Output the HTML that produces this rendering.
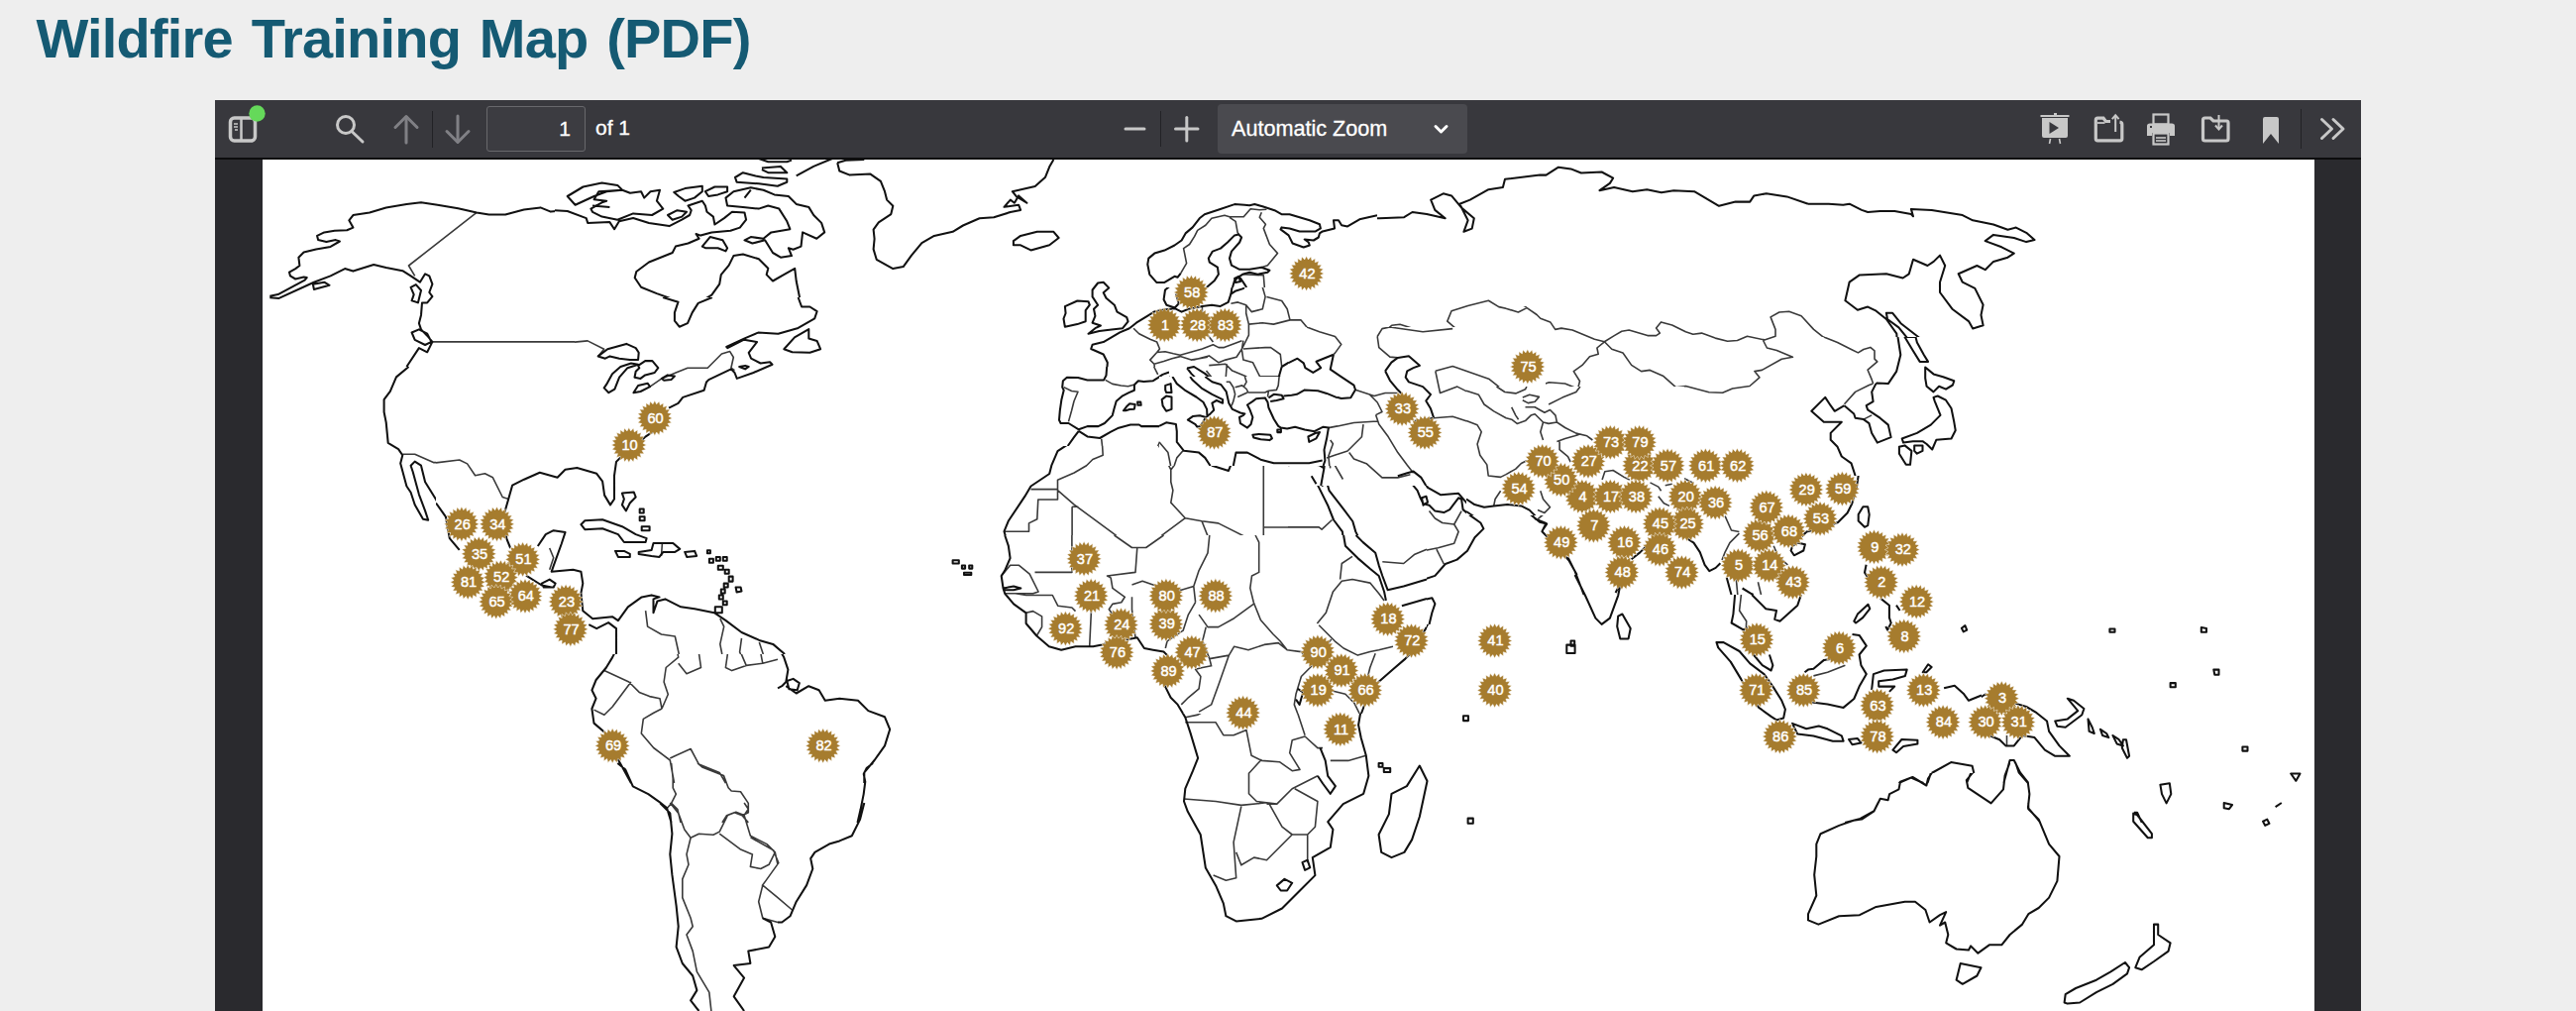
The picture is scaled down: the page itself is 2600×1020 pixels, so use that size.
<!DOCTYPE html>
<html><head><meta charset="utf-8">
<style>
html,body{margin:0;padding:0;}
body{width:2600px;height:1020px;overflow:hidden;background:#eeeeee;position:relative;font-family:"Liberation Sans",sans-serif;}
#title{position:absolute;left:36.5px;top:1px;margin:0;font-size:56px;font-weight:bold;color:#155a73;letter-spacing:-0.8px;word-spacing:4px;line-height:76px;white-space:nowrap;}
#viewer{position:absolute;left:217px;top:101px;width:2166px;height:919px;background:#2a2a2e;}
#toolbar{position:absolute;left:0;top:0;width:2166px;height:58px;background:#38383d;border-bottom:2px solid #0c0c0d;}
#page{position:absolute;left:48px;top:60px;width:2071px;height:900px;background:#fff;}
.ic{position:absolute;}
#pagenum{-webkit-text-stroke:0.3px #fff;position:absolute;left:274px;top:6px;width:100px;height:46px;box-sizing:border-box;border:1.5px solid #68686c;border-radius:3px;background:#3c3c41;color:#fff;font-size:21px;text-align:right;padding-right:14px;line-height:44px;}
#of{-webkit-text-stroke:0.3px #fff;position:absolute;left:384px;top:6px;line-height:44px;color:#fff;font-size:21px;}
#zoomsel{-webkit-text-stroke:0.3px #fff;position:absolute;left:1012px;top:4px;width:252px;height:50px;background:#4a4a4f;border-radius:4px;color:#fff;font-size:21.6px;line-height:50px;}
#zoomsel span{position:absolute;left:14px;top:0;}
.sep{position:absolute;width:1px;background:#222226;}
svg{position:absolute;left:0;top:0;}
</style></head>
<body>
<h1 id="title">Wildfire Training Map (PDF)</h1>
<div id="viewer">
  <div id="toolbar">
    <!-- sidebar toggle -->
    <svg class="ic" style="left:12px;top:14px" width="40" height="34" viewBox="0 0 40 34">
      <rect x="3.5" y="4" width="25" height="23" rx="4" fill="none" stroke="#c8c8c8" stroke-width="3.5"/>
      <line x1="14.5" y1="5" x2="14.5" y2="27" stroke="#c8c8c8" stroke-width="2.5"/>
      <line x1="7" y1="10" x2="11" y2="10" stroke="#c8c8c8" stroke-width="1.5"/>
      <line x1="7" y1="13" x2="11" y2="13" stroke="#c8c8c8" stroke-width="1.5"/>
      <line x1="8" y1="16" x2="11" y2="16" stroke="#c8c8c8" stroke-width="1.5"/>
      <circle cx="28.5" cy="0" r="0" fill="#65d95a"/>
    </svg>
    <svg class="ic" style="left:33px;top:5px" width="20" height="20"><circle cx="9.5" cy="8.5" r="8.2" fill="#65d95a"/></svg>
    <!-- search -->
    <svg class="ic" style="left:118px;top:12px" width="34" height="34" viewBox="0 0 34 34">
      <circle cx="14" cy="13" r="8.5" fill="none" stroke="#c8c8c8" stroke-width="3"/>
      <line x1="20" y1="19.5" x2="31" y2="30" stroke="#c8c8c8" stroke-width="3" stroke-linecap="round"/>
    </svg>
    <!-- up -->
    <svg class="ic" style="left:178px;top:12px" width="30" height="34" viewBox="0 0 30 34">
      <line x1="15" y1="5" x2="15" y2="31" stroke="#808085" stroke-width="3" stroke-linecap="round"/>
      <polyline points="4,15.5 15,4.5 26,15.5" fill="none" stroke="#808085" stroke-width="3" stroke-linecap="round" stroke-linejoin="round"/>
    </svg>
    <div class="sep" style="left:219px;top:11px;height:37px"></div>
    <!-- down -->
    <svg class="ic" style="left:230px;top:12px" width="30" height="34" viewBox="0 0 30 34">
      <line x1="15" y1="4" x2="15" y2="30" stroke="#808085" stroke-width="3" stroke-linecap="round"/>
      <polyline points="4,19.5 15,30.5 26,19.5" fill="none" stroke="#808085" stroke-width="3" stroke-linecap="round" stroke-linejoin="round"/>
    </svg>
    <div id="pagenum">1</div>
    <div id="of">of 1</div>
    <!-- zoom out -->
    <svg class="ic" style="left:915px;top:12px" width="30" height="34" viewBox="0 0 30 34">
      <line x1="4" y1="17" x2="23" y2="17" stroke="#c8c8c8" stroke-width="3" stroke-linecap="round"/>
    </svg>
    <div class="sep" style="left:954px;top:11px;height:36px"></div>
    <!-- zoom in -->
    <svg class="ic" style="left:966px;top:12px" width="30" height="34" viewBox="0 0 30 34">
      <line x1="3.5" y1="17" x2="26" y2="17" stroke="#c8c8c8" stroke-width="3" stroke-linecap="round"/>
      <line x1="14.8" y1="5.5" x2="14.8" y2="29" stroke="#c8c8c8" stroke-width="3" stroke-linecap="round"/>
    </svg>
    <div id="zoomsel"><span>Automatic Zoom</span>
      <svg class="ic" style="left:217px;top:19px" width="20" height="14" viewBox="0 0 20 14"><polyline points="3,3.5 8.5,9 14,3.5" fill="none" stroke="#fff" stroke-width="3" stroke-linecap="round" stroke-linejoin="round"/></svg>
    </div>
    <!-- right icons -->
    <svg class="ic" style="left:1840px;top:12px" width="36" height="36" viewBox="0 0 36 36">
      <line x1="2.5" y1="4" x2="31.5" y2="4" stroke="#c8c8c8" stroke-width="2"/>
      <rect x="16" y="1" width="3" height="3" fill="#c8c8c8"/>
      <path d="M4 6 H30 V24 Q30 26 28 26 H6 Q4 26 4 24 Z" fill="#c8c8c8"/>
      <path d="M11.5 10 L21 16 L11.5 22 Z" fill="#38383d"/>
      <line x1="12.5" y1="27" x2="11.5" y2="32" stroke="#c8c8c8" stroke-width="1.6"/>
      <line x1="21.5" y1="27" x2="22.5" y2="32" stroke="#c8c8c8" stroke-width="1.6"/>
    </svg>
    <svg class="ic" style="left:1895px;top:12px" width="36" height="36" viewBox="0 0 36 36">
      <path d="M18 9.5 H13.5 L11 6.2 H5.2 Q3.3 6.2 3.3 8.2 V27 Q3.3 28.8 5.2 28.8 H27.8 Q29.8 28.8 29.8 27 V12.5 Q29.8 10.5 27.5 10.2" fill="none" stroke="#c8c8c8" stroke-width="3.2"/>
      <line x1="5" y1="11" x2="12.5" y2="11" stroke="#c8c8c8" stroke-width="1.8"/>
      <line x1="23.2" y1="20" x2="23.2" y2="3.5" stroke="#c8c8c8" stroke-width="2"/>
      <polyline points="19.8,7.2 23.2,3.3 26.6,7.2" fill="none" stroke="#c8c8c8" stroke-width="2"/>
    </svg>
    <svg class="ic" style="left:1949px;top:12px" width="36" height="36" viewBox="0 0 36 36">
      <rect x="7.5" y="2.5" width="15" height="10" fill="none" stroke="#c8c8c8" stroke-width="2.2"/>
      <path d="M1 14 Q1 11.5 4 11.5 H26 Q29 11.5 29 14 V24 H24 V21 H6 V24 H1 Z" fill="#c8c8c8"/>
      <rect x="7.5" y="21.5" width="15" height="11" fill="none" stroke="#c8c8c8" stroke-width="2.2"/>
      <line x1="10" y1="26" x2="20" y2="26" stroke="#c8c8c8" stroke-width="1.6"/>
      <line x1="10" y1="29" x2="20" y2="29" stroke="#c8c8c8" stroke-width="1.6"/>
      <rect x="4" y="14" width="2" height="2" fill="#38383d"/>
    </svg>
    <svg class="ic" style="left:2004px;top:12px" width="36" height="36" viewBox="0 0 36 36">
      <path d="M2.5 8 Q2.5 6 4.5 6 H10 L13 9 H26.5 Q28 9 28 11 V27 Q28 29 26 29 H4.5 Q2.5 29 2.5 27 Z" fill="none" stroke="#c8c8c8" stroke-width="3.2"/>
      <line x1="18.5" y1="3" x2="18.5" y2="17" stroke="#c8c8c8" stroke-width="2"/>
      <polyline points="15,13.5 18.5,17.5 22,13.5" fill="none" stroke="#c8c8c8" stroke-width="2"/>
    </svg>
    <svg class="ic" style="left:2064px;top:12px" width="24" height="36" viewBox="0 0 24 36">
      <path d="M3 7 Q3 5 5 5 H17 Q19 5 19 7 V32 L11 22 L3 32 Z" fill="#c8c8c8"/>
    </svg>
    <div class="sep" style="left:2105px;top:9px;height:40px"></div>
    <svg class="ic" style="left:2122px;top:12px" width="32" height="36" viewBox="0 0 32 36">
      <polyline points="4.5,7.5 14.5,17 4.5,26.5" fill="none" stroke="#c8c8c8" stroke-width="3" stroke-linecap="round" stroke-linejoin="round"/>
      <polyline points="16,7.5 26,17 16,26.5" fill="none" stroke="#c8c8c8" stroke-width="3" stroke-linecap="round" stroke-linejoin="round"/>
    </svg>
  </div>
  <div id="page">
<svg width="2071" height="860" viewBox="0 0 2071 860" style="position:absolute;left:0;top:-1px">
<defs><mask id="mk" maskUnits="userSpaceOnUse" x="0" y="0" width="2071" height="860"><rect x="-10" y="-10" width="2100" height="900" fill="#fff"/><rect x="1035" y="320" width="230" height="150" fill="#000"/><rect x="295" y="0" width="280" height="160" fill="#000"/><rect x="1255" y="150" width="320" height="90" fill="#000"/><rect x="175" y="300" width="360" height="200" fill="#000"/><rect x="785" y="120" width="350" height="140" fill="#000"/><rect x="315" y="140" width="260" height="120" fill="#000"/><rect x="785" y="210" width="130" height="80" fill="#000"/><rect x="1435" y="280" width="260" height="160" fill="#000"/><rect x="1555" y="180" width="180" height="140" fill="#000"/><rect x="1035" y="170" width="260" height="160" fill="#000"/><rect x="905" y="220" width="180" height="90" fill="#000"/><rect x="1215" y="230" width="220" height="130" fill="#000"/><rect x="885" y="520" width="300" height="260" fill="#000"/><rect x="865" y="30" width="260" height="100" fill="#000"/><rect x="1455" y="440" width="280" height="180" fill="#000"/><rect x="735" y="380" width="440" height="180" fill="#000"/></mask><mask id="cp0" maskUnits="userSpaceOnUse" x="0" y="0" width="2071" height="860"><rect x="1035" y="320" width="230" height="150" fill="#fff"/><rect x="295" y="0" width="280" height="160" fill="#000"/><rect x="1255" y="150" width="320" height="90" fill="#000"/><rect x="175" y="300" width="360" height="200" fill="#000"/><rect x="785" y="120" width="350" height="140" fill="#000"/><rect x="315" y="140" width="260" height="120" fill="#000"/><rect x="785" y="210" width="130" height="80" fill="#000"/><rect x="1435" y="280" width="260" height="160" fill="#000"/><rect x="1555" y="180" width="180" height="140" fill="#000"/><rect x="1035" y="170" width="260" height="160" fill="#000"/><rect x="905" y="220" width="180" height="90" fill="#000"/><rect x="1215" y="230" width="220" height="130" fill="#000"/><rect x="885" y="520" width="300" height="260" fill="#000"/><rect x="865" y="30" width="260" height="100" fill="#000"/><rect x="1455" y="440" width="280" height="180" fill="#000"/><rect x="735" y="380" width="440" height="180" fill="#000"/></mask><mask id="cp1" maskUnits="userSpaceOnUse" x="0" y="0" width="2071" height="860"><rect x="295" y="0" width="280" height="160" fill="#fff"/><rect x="1255" y="150" width="320" height="90" fill="#000"/><rect x="175" y="300" width="360" height="200" fill="#000"/><rect x="785" y="120" width="350" height="140" fill="#000"/><rect x="315" y="140" width="260" height="120" fill="#000"/><rect x="785" y="210" width="130" height="80" fill="#000"/><rect x="1435" y="280" width="260" height="160" fill="#000"/><rect x="1555" y="180" width="180" height="140" fill="#000"/><rect x="1035" y="170" width="260" height="160" fill="#000"/><rect x="905" y="220" width="180" height="90" fill="#000"/><rect x="1215" y="230" width="220" height="130" fill="#000"/><rect x="885" y="520" width="300" height="260" fill="#000"/><rect x="865" y="30" width="260" height="100" fill="#000"/><rect x="1455" y="440" width="280" height="180" fill="#000"/><rect x="735" y="380" width="440" height="180" fill="#000"/></mask><mask id="cp2" maskUnits="userSpaceOnUse" x="0" y="0" width="2071" height="860"><rect x="1255" y="150" width="320" height="90" fill="#fff"/><rect x="175" y="300" width="360" height="200" fill="#000"/><rect x="785" y="120" width="350" height="140" fill="#000"/><rect x="315" y="140" width="260" height="120" fill="#000"/><rect x="785" y="210" width="130" height="80" fill="#000"/><rect x="1435" y="280" width="260" height="160" fill="#000"/><rect x="1555" y="180" width="180" height="140" fill="#000"/><rect x="1035" y="170" width="260" height="160" fill="#000"/><rect x="905" y="220" width="180" height="90" fill="#000"/><rect x="1215" y="230" width="220" height="130" fill="#000"/><rect x="885" y="520" width="300" height="260" fill="#000"/><rect x="865" y="30" width="260" height="100" fill="#000"/><rect x="1455" y="440" width="280" height="180" fill="#000"/><rect x="735" y="380" width="440" height="180" fill="#000"/></mask><mask id="cp3" maskUnits="userSpaceOnUse" x="0" y="0" width="2071" height="860"><rect x="175" y="300" width="360" height="200" fill="#fff"/><rect x="785" y="120" width="350" height="140" fill="#000"/><rect x="315" y="140" width="260" height="120" fill="#000"/><rect x="785" y="210" width="130" height="80" fill="#000"/><rect x="1435" y="280" width="260" height="160" fill="#000"/><rect x="1555" y="180" width="180" height="140" fill="#000"/><rect x="1035" y="170" width="260" height="160" fill="#000"/><rect x="905" y="220" width="180" height="90" fill="#000"/><rect x="1215" y="230" width="220" height="130" fill="#000"/><rect x="885" y="520" width="300" height="260" fill="#000"/><rect x="865" y="30" width="260" height="100" fill="#000"/><rect x="1455" y="440" width="280" height="180" fill="#000"/><rect x="735" y="380" width="440" height="180" fill="#000"/></mask><mask id="cp4" maskUnits="userSpaceOnUse" x="0" y="0" width="2071" height="860"><rect x="785" y="120" width="350" height="140" fill="#fff"/><rect x="315" y="140" width="260" height="120" fill="#000"/><rect x="785" y="210" width="130" height="80" fill="#000"/><rect x="1435" y="280" width="260" height="160" fill="#000"/><rect x="1555" y="180" width="180" height="140" fill="#000"/><rect x="1035" y="170" width="260" height="160" fill="#000"/><rect x="905" y="220" width="180" height="90" fill="#000"/><rect x="1215" y="230" width="220" height="130" fill="#000"/><rect x="885" y="520" width="300" height="260" fill="#000"/><rect x="865" y="30" width="260" height="100" fill="#000"/><rect x="1455" y="440" width="280" height="180" fill="#000"/><rect x="735" y="380" width="440" height="180" fill="#000"/></mask><mask id="cp5" maskUnits="userSpaceOnUse" x="0" y="0" width="2071" height="860"><rect x="315" y="140" width="260" height="120" fill="#fff"/><rect x="785" y="210" width="130" height="80" fill="#000"/><rect x="1435" y="280" width="260" height="160" fill="#000"/><rect x="1555" y="180" width="180" height="140" fill="#000"/><rect x="1035" y="170" width="260" height="160" fill="#000"/><rect x="905" y="220" width="180" height="90" fill="#000"/><rect x="1215" y="230" width="220" height="130" fill="#000"/><rect x="885" y="520" width="300" height="260" fill="#000"/><rect x="865" y="30" width="260" height="100" fill="#000"/><rect x="1455" y="440" width="280" height="180" fill="#000"/><rect x="735" y="380" width="440" height="180" fill="#000"/></mask><mask id="cp6" maskUnits="userSpaceOnUse" x="0" y="0" width="2071" height="860"><rect x="785" y="210" width="130" height="80" fill="#fff"/><rect x="1435" y="280" width="260" height="160" fill="#000"/><rect x="1555" y="180" width="180" height="140" fill="#000"/><rect x="1035" y="170" width="260" height="160" fill="#000"/><rect x="905" y="220" width="180" height="90" fill="#000"/><rect x="1215" y="230" width="220" height="130" fill="#000"/><rect x="885" y="520" width="300" height="260" fill="#000"/><rect x="865" y="30" width="260" height="100" fill="#000"/><rect x="1455" y="440" width="280" height="180" fill="#000"/><rect x="735" y="380" width="440" height="180" fill="#000"/></mask><mask id="cp7" maskUnits="userSpaceOnUse" x="0" y="0" width="2071" height="860"><rect x="1435" y="280" width="260" height="160" fill="#fff"/><rect x="1555" y="180" width="180" height="140" fill="#000"/><rect x="1035" y="170" width="260" height="160" fill="#000"/><rect x="905" y="220" width="180" height="90" fill="#000"/><rect x="1215" y="230" width="220" height="130" fill="#000"/><rect x="885" y="520" width="300" height="260" fill="#000"/><rect x="865" y="30" width="260" height="100" fill="#000"/><rect x="1455" y="440" width="280" height="180" fill="#000"/><rect x="735" y="380" width="440" height="180" fill="#000"/></mask><mask id="cp8" maskUnits="userSpaceOnUse" x="0" y="0" width="2071" height="860"><rect x="1555" y="180" width="180" height="140" fill="#fff"/><rect x="1035" y="170" width="260" height="160" fill="#000"/><rect x="905" y="220" width="180" height="90" fill="#000"/><rect x="1215" y="230" width="220" height="130" fill="#000"/><rect x="885" y="520" width="300" height="260" fill="#000"/><rect x="865" y="30" width="260" height="100" fill="#000"/><rect x="1455" y="440" width="280" height="180" fill="#000"/><rect x="735" y="380" width="440" height="180" fill="#000"/></mask><mask id="cp9" maskUnits="userSpaceOnUse" x="0" y="0" width="2071" height="860"><rect x="1035" y="170" width="260" height="160" fill="#fff"/><rect x="905" y="220" width="180" height="90" fill="#000"/><rect x="1215" y="230" width="220" height="130" fill="#000"/><rect x="885" y="520" width="300" height="260" fill="#000"/><rect x="865" y="30" width="260" height="100" fill="#000"/><rect x="1455" y="440" width="280" height="180" fill="#000"/><rect x="735" y="380" width="440" height="180" fill="#000"/></mask><mask id="cp10" maskUnits="userSpaceOnUse" x="0" y="0" width="2071" height="860"><rect x="905" y="220" width="180" height="90" fill="#fff"/><rect x="1215" y="230" width="220" height="130" fill="#000"/><rect x="885" y="520" width="300" height="260" fill="#000"/><rect x="865" y="30" width="260" height="100" fill="#000"/><rect x="1455" y="440" width="280" height="180" fill="#000"/><rect x="735" y="380" width="440" height="180" fill="#000"/></mask><mask id="cp11" maskUnits="userSpaceOnUse" x="0" y="0" width="2071" height="860"><rect x="1215" y="230" width="220" height="130" fill="#fff"/><rect x="885" y="520" width="300" height="260" fill="#000"/><rect x="865" y="30" width="260" height="100" fill="#000"/><rect x="1455" y="440" width="280" height="180" fill="#000"/><rect x="735" y="380" width="440" height="180" fill="#000"/></mask><mask id="cp12" maskUnits="userSpaceOnUse" x="0" y="0" width="2071" height="860"><rect x="885" y="520" width="300" height="260" fill="#fff"/><rect x="865" y="30" width="260" height="100" fill="#000"/><rect x="1455" y="440" width="280" height="180" fill="#000"/><rect x="735" y="380" width="440" height="180" fill="#000"/></mask><mask id="cp13" maskUnits="userSpaceOnUse" x="0" y="0" width="2071" height="860"><rect x="865" y="30" width="260" height="100" fill="#fff"/><rect x="1455" y="440" width="280" height="180" fill="#000"/><rect x="735" y="380" width="440" height="180" fill="#000"/></mask><mask id="cp14" maskUnits="userSpaceOnUse" x="0" y="0" width="2071" height="860"><rect x="1455" y="440" width="280" height="180" fill="#fff"/><rect x="735" y="380" width="440" height="180" fill="#000"/></mask><mask id="cp15" maskUnits="userSpaceOnUse" x="0" y="0" width="2071" height="860"><rect x="735" y="380" width="440" height="180" fill="#fff"/></mask></defs>
<g mask="url(#mk)"><path d="M216.1 54.4 L147.5 108.0 L153.7 118.4 M171.4 184.9 L327.2 184.9 L336.6 189.5 L353.2 192.2 M927.2 122.6 L931.3 93.5 L945.9 72.7 L960.4 60.2 L977.1 58.2 L1006.1 51.9 M1006.1 51.9 L1010.3 68.6 L1022.8 97.6 L1014.4 112.2 M995.7 120.5 L1012.4 122.6 M979.1 135.0 L1006.1 133.0 L1012.4 137.1 M977.1 145.4 L993.7 153.7 L1008.2 145.4 M1012.4 122.6 L1014.4 141.3 L1008.2 151.7 L995.7 153.7 L997.8 166.2 L1018.6 168.3 L1040.0 164.1 M1012.4 139.2 L1031.1 141.3 L1035.2 153.7 L1040.0 157.9 M879.4 172.4 L889.8 182.8 L900.2 187.0 L910.6 184.9 M902.3 195.3 L910.6 205.7 L935.5 203.6 L948.0 207.8 M956.3 180.7 L987.4 182.8 L991.6 191.1 L987.4 205.7 M898.1 199.4 L914.7 195.3 L933.4 191.1 L945.9 188.0 L960.4 188.0 L985.4 190.1 M991.6 193.2 L1016.5 191.1 L1026.9 199.4 L1029.0 210.0 M997.8 205.7 L1014.4 201.5 M952.1 180.7 L950.0 149.6 M1127.3 178.7 L1139.7 168.3 L1148.0 167.2 L1170.9 174.5 L1183.3 171.4 L1195.8 175.5 L1203.1 170.4 L1195.8 164.1 L1200.0 153.7 L1216.6 148.5 L1237.4 143.3 L1247.8 149.6 L1266.4 153.7 L1274.8 149.6 L1287.2 160.0 L1303.8 170.4 L1310.1 172.4 L1326.7 178.7 L1351.6 182.8 L1357.9 184.9 L1368.2 199.4 L1382.8 210.0 M1353.7 182.8 L1372.4 173.5 L1382.8 172.4 L1405.6 178.7 L1409.8 166.2 L1420.2 168.3 L1445.1 176.6 L1455.5 176.6 L1482.5 183.9 L1497.1 178.7 L1515.7 181.8 L1524.1 174.5 L1522.0 160.0 L1534.4 153.7 L1549.0 155.8 L1560.0 162.0 M1353.7 182.8 L1347.5 191.1 L1343.3 199.4 L1335.0 205.7 L1330.9 210.0 M1515.7 181.8 L1515.7 191.1 L1524.1 193.2 L1542.8 200.5 L1534.4 203.6 L1517.8 210.0 M1127.3 178.7 L1125.2 187.0 L1133.5 197.4 L1141.8 203.6 M1040.0 162.0 L1046.2 162.0 L1056.6 172.4 L1081.6 178.7 L1088.8 187.0 L1081.6 197.4 L1062.9 207.8 M1040.0 201.5 L1048.3 203.6 L1052.5 210.0 M1560.0 164.1 L1572.5 178.7 L1587.0 184.9 L1609.9 195.3 L1622.3 190.1 L1628.6 205.7 L1624.4 210.0 M141.3 298.3 L153.7 298.3 L172.4 306.6 L191.1 306.6 L199.4 304.5 L205.7 307.6 L211.9 320.1 L216.1 323.2 L224.4 318.0 L232.7 323.2 L241.0 340.9 L247.2 345.0 M403.0 388.7 L403.0 400.1 M810.9 232.9 L823.3 234.9 L815.0 257.8 L815.0 267.1 M850.3 223.5 L862.8 229.7 L877.3 230.8 M968.7 212.1 L972.9 222.5 L981.2 228.7 L993.7 222.5 L1008.2 218.3 L1022.8 220.4 M981.2 228.7 L985.4 241.2 L995.7 251.6 M847.2 282.7 L848.2 299.3 L837.9 303.5 L831.6 309.7 L819.2 317.0 L802.5 324.3 L802.5 334.7 L819.2 349.2 L877.3 391.8 M775.5 333.6 L802.5 333.6 L802.5 344.0 L782.8 344.0 L781.8 363.7 L773.5 367.9 L773.5 376.2 L748.5 376.2 M817.1 351.3 L823.3 351.3 M817.1 351.3 L817.1 417.8 L779.7 417.8 M877.3 391.8 L891.9 391.8 L931.3 362.7 M881.5 392.8 L879.4 417.8 L852.4 418.8 M908.5 269.2 L904.3 288.9 L916.8 313.9 L916.8 326.3 L918.9 334.7 L916.8 347.1 L931.3 362.7 L948.0 365.8 L964.6 367.9 L1006.1 388.7 M929.3 297.3 L916.8 313.9 M1010.3 304.5 L1010.3 388.7 L1006.1 388.7 L1006.1 420.0 M1010.3 372.0 L1040.0 372.0 M948.0 365.8 L956.3 386.6 L952.1 407.4 L943.8 420.0 M1040.0 372.0 L1067.0 374.1 L1079.5 365.8 M1073.2 270.2 L1079.5 268.2 L1094.0 266.1 L1108.6 267.1 L1123.1 265.1 L1127.3 259.9 L1121.0 247.4 L1116.9 239.1 M1110.6 268.2 L1106.5 282.7 L1096.1 293.1 L1096.1 301.4 L1102.3 303.5 M1077.4 301.4 L1096.1 295.2 L1102.3 301.4 L1114.8 305.6 L1131.4 318.0 L1146.0 322.2 L1152.2 318.0 M1123.1 255.7 L1135.6 280.6 L1139.7 293.1 L1152.2 309.7 L1156.3 316.0 M1118.9 405.3 L1135.6 403.2 L1162.6 394.9 L1185.4 392.8 L1206.2 372.0 M1185.4 392.8 L1191.7 409.4 M1185.4 357.5 L1202.0 367.9 L1206.2 376.2 M1183.3 214.2 L1185.4 222.5 L1197.9 228.7 L1216.6 230.8 L1231.1 243.2 L1241.5 255.7 L1258.1 261.9 L1268.5 268.2 M1185.4 261.9 L1202.0 259.9 L1222.8 266.1 L1231.1 278.6 L1249.8 266.1 L1258.1 264.0 M1227.0 278.6 L1227.0 293.1 L1237.4 313.9 L1247.8 319.1 L1260.2 322.2 L1247.8 338.8 L1243.6 351.3 M1258.1 322.2 L1272.7 305.6 L1291.4 293.1 L1301.8 280.6 L1293.5 270.2 L1308.0 264.0 M1308.0 264.0 L1318.4 272.3 L1326.7 278.6 L1341.2 282.7 M1262.3 249.5 L1272.7 241.2 L1289.3 239.1 L1285.1 247.4 L1297.6 251.6 L1305.9 259.9 L1283.1 259.9 L1268.5 266.1 M1268.5 243.2 L1272.7 230.8 L1289.3 226.6 L1310.1 222.5 L1328.8 220.4 L1328.8 232.9 L1305.9 241.2 L1297.6 249.5 M1328.8 210.0 L1326.7 220.4 L1330.9 228.7 M1382.8 210.0 L1393.2 216.2 L1424.3 228.7 L1476.3 234.9 L1509.5 224.5 L1517.8 214.2 L1528.2 210.0 M1291.4 293.1 L1308.0 299.3 L1312.2 307.6 L1289.3 334.7 L1299.7 353.3 L1287.2 363.7 M1351.6 316.0 L1364.1 316.0 L1380.7 322.2 L1393.2 326.3 L1405.6 330.5 M1405.6 330.5 L1414.0 338.8 L1409.8 347.1 L1422.3 359.6 L1434.7 355.4 M1465.9 413.6 L1476.3 405.3 L1486.7 382.4 L1476.3 363.7 L1472.1 359.6 M1597.4 249.5 L1607.8 237.0 L1622.3 228.7 L1624.4 222.5 L1620.2 214.2 L1626.5 210.0 M1616.1 260.9 L1626.5 257.8 M344.9 516.6 L369.8 528.0 L380.2 538.4 L390.6 542.6 L401.0 544.7 L403.0 555.0 M334.5 556.1 L344.9 561.3 L353.2 553.0 L371.9 528.0 M403.0 555.0 L394.7 559.2 L384.3 565.4 L382.3 580.0 L394.7 594.5 L411.3 607.0 L415.5 630.0 M386.4 447.0 L386.4 465.7 L392.6 474.0 L415.5 482.3 L419.7 503.1 L407.2 513.5 L405.1 528.0 L409.3 540.5 L403.0 555.0 M419.7 509.3 L428.0 519.7 L442.5 513.5 L440.4 498.9 L463.3 492.7 L469.5 498.9 L467.4 513.5 L473.7 516.6 L488.2 511.4 L504.8 509.3 L520.0 505.2 M463.3 469.9 L461.2 482.3 L463.3 492.7 M488.2 486.5 L482.0 496.9 L488.2 511.4 M504.8 488.6 L502.8 498.9 L504.8 509.3 M411.3 604.9 L432.1 595.5 L440.4 611.1 L461.2 619.4 L467.4 630.0 M750.6 438.7 L769.3 437.7 L781.8 440.8 L794.2 439.7 L800.5 451.2 L804.6 452.2 L821.2 453.2 L835.8 457.4 M775.5 420.0 L779.7 430.4 L781.8 438.7 M772.4 461.6 L779.7 456.4 L785.9 461.6 L783.8 474.0 L790.1 469.9 L796.3 480.2 M835.8 457.4 L835.8 490.6 M852.4 426.2 L858.6 436.6 L871.1 440.8 L879.4 436.6 M856.6 440.8 L862.8 449.1 M877.3 436.6 L877.3 451.2 L881.5 482.3 L889.8 492.7 M881.5 482.3 L891.9 494.8 L908.5 495.8 M910.6 420.0 L927.2 434.5 L941.7 428.3 L943.8 420.0 M941.7 436.6 L935.5 457.4 L929.3 474.0 L910.6 490.6 M945.9 459.5 L952.1 471.9 L977.1 461.6 L999.9 449.1 L1006.1 465.7 L1024.8 482.3 L1031.1 494.8 L1040.0 496.9 M952.1 474.0 L948.0 498.9 L958.4 505.2 L956.3 511.4 L975.0 503.1 L979.1 492.7 L997.8 496.9 L1022.8 490.6 M997.8 420.0 L995.7 440.8 L999.9 449.1 M977.1 503.1 L970.8 517.6 L964.6 534.3 L952.1 555.0 L931.3 563.3 M939.7 517.6 L945.9 528.0 L948.0 540.5 L931.3 546.7 L927.2 553.0 M935.5 567.5 L958.4 568.5 L966.7 582.0 L977.1 582.0 L983.3 575.8 L993.7 577.9 L995.7 600.7 L1004.1 602.8 L1022.8 607.0 L1040.0 615.3 M1008.2 604.9 L1006.1 619.4 L995.7 621.5 L993.7 630.0 M1040.0 590.4 L1035.2 600.7 L1040.0 611.1 M1089.9 426.2 L1081.6 436.6 L1073.2 453.2 L1073.2 465.7 L1064.9 469.9 L1071.2 476.1 L1081.6 486.5 L1089.9 494.8 L1102.3 501.0 L1118.9 496.9 L1127.3 498.9 L1141.8 492.7 M1118.9 496.9 L1116.9 509.3 L1114.8 519.7 M1089.9 426.2 L1108.6 425.2 L1123.1 438.7 M1108.6 555.0 L1081.6 536.3 L1060.8 536.3 M1040.0 494.8 L1048.3 498.9 L1048.3 519.7 L1046.2 528.0 L1040.0 544.7 M1040.0 555.0 L1048.3 565.4 L1056.6 582.0 L1081.6 592.4 L1112.7 602.8 M1083.6 608.0 L1112.7 602.8 M1040.0 586.2 L1052.5 582.0 L1064.9 588.3 L1069.1 596.6 L1077.4 600.7 L1073.2 613.2 L1077.4 630.0 M1040.0 607.0 L1048.3 615.3 L1040.0 619.4 M1048.3 630.0 L1058.7 625.7 M1568.3 521.8 L1580.8 517.6 L1597.4 511.4 M1760.5 582.0 L1760.5 592.4 M411.3 650.0 L419.7 660.4 L425.9 677.0 L432.1 685.3 L428.0 701.9 L430.0 712.3 L423.8 726.9 L423.8 745.6 L432.1 766.3 L434.2 774.7 L428.0 783.0 L434.2 799.6 L438.4 820.4 L450.8 841.1 L452.9 860.0 M432.1 685.3 L440.4 681.2 L455.0 682.2 L461.2 679.1 L469.5 662.5 L477.8 659.3 L486.1 662.5 L492.4 683.2 L509.0 691.6 L517.3 699.9 L511.1 712.3 L502.8 716.5 L492.4 714.4 L494.4 701.9 L482.0 696.7 L461.2 681.2 M486.1 650.0 L490.3 656.2 L486.1 662.5 M517.3 699.9 L520.0 712.3 M504.8 733.1 L500.7 749.7 L504.8 766.3 L520.0 770.5 M504.8 733.1 L520.0 745.6 M520.0 745.6 L534.5 758.0 M989.5 654.2 L987.4 670.8 L981.2 687.4 L981.2 724.8 L970.8 728.9 L958.4 724.8 M989.5 654.2 L1014.4 650.0 M1016.5 650.0 L1026.9 670.8 L1040.0 681.2 M1040.0 681.2 L1024.8 695.7 L1012.4 706.1 L999.9 701.9 L987.4 714.4 L983.3 701.9 M1067.0 650.0 L1062.9 666.6 L1054.5 681.2 L1040.0 681.2 M1054.5 681.2 L1056.6 701.9 L1056.6 712.3 M412.6 610.0 L414.2 625.5 L414.2 634.8 L417.3 641.1 L412.6 650.4 L408.0 655.8 M412.6 650.4 L418.9 656.6 L422.0 669.9 M439.0 610.0 L443.7 613.9 L465.4 622.4 L470.1 634.8 L473.2 638.0 L482.5 638.7 L490.3 650.4 L490.3 659.7 L484.1 662.8 L476.3 659.7 L468.5 662.8 L463.9 669.9 M484.1 662.8 L490.3 669.9 M930.0 647.3 L939.3 645.7 L954.9 648.0 L970.4 647.3 L985.9 651.1 L1001.5 648.8 L1013.9 650.4 L1024.8 651.1 L1040.3 637.2 L1063.6 624.0 L1068.2 620.9 L1066.7 610.0 M1003.0 648.8 L995.2 638.0 L994.5 624.0 L998.4 617.8 L1006.1 617.0 L1009.2 610.0 M1040.3 637.2 L1058.9 642.6 L1065.1 651.9 L1066.7 669.9 M1013.9 650.4 L1020.1 656.6 L1027.9 669.9 M988.3 655.0 L988.3 669.9 M988.3 655.0 L1006.1 655.0 M291.1 413.9 L287.9 421.8 L281.6 428.1 L281.6 431.3 L291.1 433.6 M280.0 401.2 L297.4 393.3 M1225.0 270.7 L1232.1 277.8 L1248.1 270.7 L1253.5 263.6 L1257.0 260.0 M1225.0 277.8 L1228.6 295.6 L1239.2 318.7 L1260.6 320.5 L1273.1 308.1 M1241.0 318.7 L1242.8 349.0 M1290.9 270.7 L1301.5 267.1 L1306.9 260.0 M1292.6 272.5 L1289.1 277.8 L1290.9 286.7 L1303.3 295.6 M1306.9 286.7 L1310.4 295.6 L1319.3 302.7 M1308.7 286.7 L1321.1 279.6 L1331.8 276.0 L1338.9 283.1 M1353.2 320.5 L1354.9 313.4 L1363.8 315.2 L1376.3 320.5 M1403.0 329.4 L1411.9 331.2 L1417.2 341.9 L1410.1 343.7 L1413.7 349.0 L1422.6 352.6 M1449.3 321.4 L1460.0 324.1 L1470.6 329.4 M1474.2 359.7 L1481.3 373.9 L1492.0 377.5 L1505.0 373.9 M1292.6 334.8 L1299.8 349.0 L1298.0 356.1 L1289.1 359.7 M1477.7 377.7 L1490.2 377.7 L1479.5 388.4 L1474.2 399.0 M1476.0 361.6 L1488.4 377.7 L1497.3 388.4 L1506.2 393.7 L1524.0 391.9 L1527.6 402.6 M1511.6 425.8 L1509.8 434.7 L1513.4 443.6 M1486.6 425.8 L1488.4 438.2 L1486.6 452.5 M492.5 684.9 L515.6 697.7 L520.8 710.6 L507.9 728.6 L504.1 733.8" fill="none" stroke="#3a3a3a" stroke-width="1.6" stroke-linejoin="round"/><path d="M7.3 138.8 L15.6 137.1 L42.6 122.6 L44.7 120.1 L41.6 119.5 L33.2 121.5 L28.0 118.4 L27.0 114.7 L33.2 111.1 L37.4 108.0 L36.4 99.7 L41.6 94.5 L54.0 91.4 L68.6 88.9 L77.9 83.5 L73.8 82.1 L64.4 84.1 L56.1 82.1 L55.1 77.9 L62.3 74.4 L72.7 72.7 L85.2 72.3 L91.4 69.6 L87.3 62.3 L91.4 57.1 L108.0 54.4 L124.7 49.4 L145.4 46.1 L160.0 44.3 L176.6 46.7 L197.4 50.3 L216.1 54.4 L228.5 56.5 L245.1 56.5 L263.8 51.5 L280.5 49.4 L290.9 53.6 L307.5 51.9 L324.1 58.6 L330.3 62.3 L327.2 64.8 L342.8 64.8 L353.2 66.5 L355.3 71.7 L359.4 64.4 L374.0 60.7 L394.7 62.3 L411.3 67.5 L428.0 61.3 L446.7 62.3 L467.4 58.6 L486.1 55.1 L488.2 49.9 L475.7 48.2 M7.3 140.2 L16.6 140.9 L51.9 124.7 L68.6 118.4 L83.1 111.1 L91.4 113.6 L112.2 107.0 L124.7 110.1 L141.3 113.2 L149.6 118.4 L158.9 124.7 L164.1 116.3 L168.3 118.4 L171.4 126.7 L168.3 135.0 L171.4 139.2 L166.2 145.4 L161.0 145.4 L160.0 157.9 L157.9 166.2 L160.0 172.4 M50.9 126.7 L62.3 124.7 L67.5 127.8 L51.9 131.9Z M149.6 129.8 L154.8 127.1 L160.0 133.0 L156.9 145.4 L150.6 143.3 L152.7 137.1Z M308.5 38.4 L324.1 30.1 L340.7 24.5 L357.3 26.6 L365.6 31.2 L378.1 34.3 L384.3 33.2 L388.5 39.5 L392.6 33.2 L401.0 32.2 L396.8 43.6 L404.1 49.9 L394.7 55.1 L374.0 60.2 L353.2 61.9 L336.6 58.2 L330.3 51.9 L340.7 47.8 L332.4 44.7 L340.7 41.6 L332.4 41.6 L315.8 45.7Z M415.5 34.3 L428.0 31.2 L444.6 28.0 L442.5 36.4 L428.0 42.6 L419.7 38.4Z M446.7 33.2 L457.1 28.0 L469.5 29.1 L467.4 34.3 L455.0 38.4Z M408.2 56.1 L417.6 53.0 L425.9 54.4 L419.7 60.2 L411.3 61.3Z M467.4 42.6 L477.8 34.3 L494.4 30.1 L488.2 39.5 L502.8 32.2 L520.0 31.2 M476.8 22.9 L479.9 16.6 L490.3 14.5 L502.8 18.7 L520.0 19.7 M502.8 9.3 L509.0 12.5 L520.0 12.9 M475.7 24.9 L520.0 24.9 M440.4 78.9 L434.2 82.1 L415.5 89.3 L403.0 97.6 L384.3 109.1 L375.6 120.1 L380.2 130.9 L394.7 138.2 L420.7 146.5 L415.5 161.0 L420.7 170.4 L430.0 167.2 L434.2 151.7 L450.8 139.2 L459.1 128.8 L463.3 116.3 L471.6 101.8 L484.1 97.2 L502.8 99.7 L509.0 108.0 L508.0 118.4 L517.3 124.7 L520.0 122.6 M436.3 76.9 L452.9 74.8 L467.4 72.7 L482.0 68.6 L487.2 60.2 L484.1 55.1 L475.7 53.6 M442.5 83.1 L452.9 78.9 L465.4 81.0 L468.5 91.4 L452.9 91.4 L442.5 87.3Z M486.1 83.1 L498.6 78.9 L509.0 78.9 L520.0 71.7 M504.8 87.3 L513.1 95.6 L520.0 97.6 M160.0 172.4 L166.2 178.7 L171.4 184.9 L166.2 195.3 L157.9 191.1 L145.4 210.0 M150.6 175.5 L157.9 172.4 L166.2 176.6 L170.4 184.9 L164.1 188.0 L153.7 182.8Z M340.7 199.4 L357.3 188.0 L371.9 188.0 L378.1 197.4 L394.7 210.0 M467.4 190.1 L484.1 182.8 L498.6 177.6 L520.0 176.6 M450.8 210.0 L467.4 197.4 L473.7 199.4 L471.6 210.0 M580.2 4.2 L582.3 12.5 L592.7 16.6 L613.5 15.6 L623.9 22.9 L628.0 33.2 L630.1 41.6 L636.3 47.8 L634.3 56.1 L621.8 64.4 L616.6 71.7 L617.6 81.0 L616.6 91.4 L619.7 101.8 L636.3 111.1 L646.7 109.1 L655.0 97.6 L665.4 85.2 L677.9 77.9 L696.6 73.8 L707.0 67.5 L723.6 60.2 L738.1 59.2 L754.8 54.0 L765.1 51.9 L763.1 46.7 L748.5 48.8 L754.8 41.6 L758.9 44.7 L763.1 37.4 L771.4 44.7 L761.0 38.4 L756.8 33.2 L779.7 28.0 L790.1 18.7 L794.2 8.3 L798.4 1.0 M580.2 4.2 L588.6 1.7 L607.3 1.0 M520.0 27.0 L534.5 19.7 L549.1 12.5 L567.8 3.1 L574.0 0.0 M520.0 5.2 L530.4 2.5 L534.5 0.0 M520.0 37.4 L528.3 36.4 L538.7 44.7 L551.2 48.8 L557.4 60.2 L567.8 68.6 L564.7 77.9 L557.4 80.0 L547.0 74.8 L542.9 82.1 L546.0 91.4 L539.7 96.6 L533.5 91.4 L529.3 92.4 L535.6 99.7 L526.2 100.8 L520.0 97.6 M520.0 56.1 L528.3 68.6 L534.5 71.7 L526.2 73.8 L520.0 71.7 M520.0 120.5 L535.6 112.2 L538.7 124.7 L542.9 141.3 L544.9 147.5 L540.8 151.7 L551.2 149.6 L559.5 155.8 L557.4 166.2 L544.9 172.4 L532.5 175.5 L520.0 178.7 M526.2 192.2 L540.8 178.7 L551.2 172.4 L553.2 182.8 L561.6 184.9 L563.6 193.2 L544.9 196.3 L528.3 194.2Z M757.9 83.1 L765.1 77.9 L781.8 73.8 L798.4 73.8 L803.6 80.0 L794.2 87.3 L775.5 92.4 L765.1 87.3 L757.9 87.3Z M809.8 149.6 L821.2 143.3 L833.7 143.3 L834.7 149.6 L829.5 157.9 L825.4 164.1 L810.9 170.4 L808.8 162.0 L810.9 155.8Z M837.9 128.8 L846.2 124.7 L852.4 129.8 L850.3 139.2 L856.6 145.4 L864.9 157.9 L873.2 161.0 L871.1 168.3 L862.8 172.4 L846.2 174.5 L833.7 177.6 L844.1 170.4 L842.0 162.0 L839.9 153.7 L846.2 149.6 L842.0 143.3 L837.9 137.1Z M927.2 122.6 L918.9 124.7 L904.3 124.7 L896.0 116.3 L894.0 103.9 L902.3 95.6 L918.9 91.4 L931.3 81.0 L943.8 60.2 L956.3 51.9 L981.2 45.7 L1002.0 46.7 L1020.7 50.9 L1040.0 55.1 M927.2 122.6 L910.6 133.0 L910.6 143.3 L925.1 149.6 M975.0 59.2 L983.3 74.8 L962.5 89.3 L954.2 106.0 L964.6 112.2 L958.4 120.5 L952.1 128.8 L948.0 143.3 L927.2 149.6 M987.4 76.9 L977.1 87.3 L975.0 108.0 L989.5 114.3 L1016.5 113.2 M1029.0 70.6 L1037.3 68.6 L1040.0 78.9 M836.8 189.1 L846.2 187.0 L862.8 178.7 L877.3 172.4 L894.0 160.0 L908.5 149.6 L925.1 149.6 L948.0 145.4 L970.8 145.4 L977.1 128.8 L983.3 119.5 L995.7 120.5 L1014.4 113.2 M836.8 189.1 L852.4 199.4 L854.5 210.0 M1040.0 56.1 L1052.5 58.2 L1067.0 64.4 L1069.1 70.6 L1058.7 73.8 L1040.0 71.7 M1040.0 83.1 L1050.4 89.3 L1060.8 83.1 L1067.0 74.8 L1081.6 72.7 L1079.5 62.3 L1087.8 61.3 L1094.0 68.6 L1110.6 60.2 L1127.3 60.2 L1152.2 59.2 L1160.5 54.0 L1175.0 56.1 L1193.7 60.2 L1183.3 51.9 L1179.2 41.6 L1191.7 35.3 L1200.0 37.4 L1210.4 49.9 L1222.8 60.2 L1220.7 70.6 L1212.4 73.8 L1216.6 62.3 L1208.3 45.7 L1218.7 41.6 L1237.4 31.2 L1251.9 29.1 L1254.0 20.8 L1289.3 16.6 L1295.5 16.6 L1308.0 8.7 L1320.5 10.4 L1330.9 14.5 L1351.6 13.5 L1363.1 19.7 L1359.9 24.9 L1349.5 32.2 L1364.1 29.1 L1382.8 33.2 L1397.3 31.2 L1411.9 34.3 L1424.3 32.2 L1445.1 33.2 L1470.0 47.8 L1486.7 43.6 L1501.2 43.6 L1505.4 37.4 L1517.8 35.3 L1538.6 38.4 L1560.0 45.7 M1135.6 210.0 L1154.3 199.4 L1166.7 207.8 L1168.8 210.0 M1560.0 45.7 L1580.8 45.7 L1595.3 46.7 L1601.6 45.7 L1614.0 51.9 L1620.2 54.0 L1632.7 53.0 L1647.3 53.0 L1663.9 56.1 L1666.0 58.2 L1663.9 50.9 L1684.7 51.9 L1715.8 57.1 L1726.2 62.3 L1747.0 66.5 L1761.5 71.7 L1769.8 69.6 L1780.2 74.8 L1788.5 82.1 L1780.2 84.1 L1767.8 80.0 L1747.0 76.9 L1738.7 83.1 L1755.3 89.3 L1767.8 95.6 L1761.5 99.7 L1747.0 103.9 L1738.7 112.2 L1730.4 108.0 L1711.7 116.3 L1715.8 124.7 L1728.3 130.9 L1736.6 147.5 L1734.5 157.9 L1736.6 168.3 L1726.2 171.4 L1722.0 164.1 L1705.4 151.7 L1693.0 135.0 L1693.0 124.7 L1698.2 108.0 L1693.0 97.6 L1686.7 103.9 L1680.5 108.0 L1666.0 101.8 L1661.8 116.3 L1655.6 120.5 L1638.9 116.3 L1611.9 117.4 L1601.6 124.7 L1597.4 143.3 L1609.9 152.7 L1620.2 149.6 L1628.6 153.7 L1638.9 162.0 L1649.3 176.6 L1651.4 210.0 M1638.9 155.8 L1645.2 155.8 L1653.5 166.2 L1672.2 180.7 L1670.1 187.0 L1680.5 203.6 L1672.2 204.6 L1659.7 180.7 L1651.4 170.4 L1640.0 162.0Z M147.5 210.0 L135.0 220.4 L128.8 234.9 L122.6 243.2 L122.6 255.7 L124.7 266.1 L126.7 286.9 L137.1 293.1 L141.3 299.3 L139.2 307.6 L145.4 330.5 L149.6 336.7 L153.7 349.2 L162.0 363.7 L167.2 364.8 L164.1 355.4 L157.9 338.8 L151.7 316.0 L149.6 309.7 L153.7 305.6 L160.0 309.7 L164.1 326.3 L174.5 343.0 L182.8 357.5 L188.0 367.9 L187.0 382.4 L199.4 397.0 L207.8 409.4 L214.0 420.0 M247.2 345.0 L251.4 332.6 L261.8 326.3 L280.5 317.0 L297.1 323.2 L307.5 313.9 L317.9 311.8 L338.6 318.0 L344.9 330.5 L346.9 345.0 L353.2 351.3 L357.3 340.9 L355.3 326.3 L357.3 307.6 L369.8 297.3 L386.4 280.6 L398.9 272.3 L413.4 251.6 L428.0 241.2 L444.6 232.9 L448.7 222.5 L469.5 214.2 L477.8 210.0 M247.2 345.0 L245.1 355.4 L243.1 376.2 L249.3 392.8 L268.0 405.3 L278.4 397.0 L284.6 382.4 L290.9 376.2 L305.4 376.2 L299.2 392.8 L290.9 415.7 L301.2 415.7 L315.8 414.6 L323.1 417.8 L324.1 420.0 M344.9 232.9 L349.0 236.0 L355.3 226.6 L359.4 214.2 L353.2 213.1 L346.9 228.7Z M376.0 234.9 L390.6 230.8 L394.7 226.6 L378.1 225.6Z M403.0 221.4 L413.4 218.3 L407.2 223.5Z M374.0 220.4 L384.3 216.2 L394.7 216.2 L396.8 210.0 M401.0 222.5 L415.5 216.2 L432.1 212.1 L444.6 210.0 M477.8 220.4 L490.3 214.2 L509.0 210.0 M363.6 337.8 L374.0 336.7 L376.0 343.0 L369.8 347.1 L371.9 355.4 L365.6 356.5 L362.5 349.2 L365.6 343.0Z M381.2 353.3 L384.3 353.3 L384.3 358.5 L381.2 358.5Z M381.2 361.7 L385.4 361.7 L385.4 364.8 L381.2 364.8Z M384.3 371.0 L390.6 371.0 L390.6 375.2 L384.3 375.2Z M322.0 370.0 L332.4 364.8 L353.2 367.9 L371.9 378.3 L386.4 382.4 L384.3 386.6 L361.5 385.5 L353.2 376.2 L336.6 372.0 L323.1 374.1Z M356.3 395.9 L365.6 397.0 L369.8 401.1 L359.4 401.1Z M380.2 394.9 L392.6 391.8 L394.7 387.6 L415.5 388.7 L420.7 394.9 L407.2 397.0 L401.0 401.1 L394.7 398.0 L381.2 398.0Z M425.9 397.0 L436.3 395.9 L436.3 401.1 L428.0 402.2Z M448.7 395.9 L452.9 395.9 L452.9 400.1 L448.7 400.1Z M450.8 404.2 L455.0 404.2 L455.0 408.4 L450.8 408.4Z M457.1 402.2 L462.2 402.2 L462.2 406.3 L457.1 406.3Z M464.3 402.2 L468.5 402.2 L468.5 406.3 L464.3 406.3Z M460.2 410.5 L466.4 410.5 L466.4 414.6 L460.2 414.6Z M466.4 414.6 L470.6 414.6 L470.6 418.8 L466.4 418.8Z M852.4 210.0 L850.3 223.5 L821.2 221.4 L808.8 222.5 L806.7 232.9 L805.7 251.6 L804.6 266.1 L815.0 267.1 L827.5 272.3 L844.1 268.2 L856.6 257.8 L862.8 243.2 L877.3 234.9 L877.3 230.8 L883.6 225.6 L900.2 222.5 L912.6 218.3 L921.0 224.5 L933.4 237.0 L952.1 248.4 L968.7 246.4 L960.4 251.6 L958.4 259.9 M869.0 253.6 L873.2 249.5 L879.4 247.4 L881.5 251.6 L873.2 254.7Z M910.6 228.7 L916.8 227.7 L916.8 234.9 L911.6 236.0Z M908.5 241.2 L916.8 240.1 L917.8 253.6 L910.6 254.7 L907.5 247.4Z M933.4 260.9 L948.0 259.9 L952.1 268.2 L941.7 272.3Z M932.4 212.1 L941.7 220.4 L956.3 230.8 L968.7 243.2 M956.3 212.1 L970.8 228.7 L979.1 237.0 L987.4 251.6 L987.4 259.9 L995.7 271.3 L999.9 264.0 L995.7 251.6 L1006.1 243.2 L1014.4 239.1 L1022.8 237.0 L1031.1 241.2 L1040.0 237.0 M1022.8 210.0 L1024.8 232.9 L1014.4 243.2 M999.9 278.6 L1014.4 278.6 L1018.6 282.7 L1004.1 282.7Z M1022.8 272.3 L1029.0 272.3 L1029.0 276.5 L1022.8 276.5Z M823.3 276.5 L842.0 281.7 L862.8 272.3 L885.6 269.2 L906.4 270.2 L916.8 266.1 L923.0 270.2 L923.0 286.9 L933.4 295.2 L952.1 301.4 L958.4 309.7 L975.0 314.9 L981.2 299.3 L989.5 296.2 L1010.3 304.5 L1040.0 309.7 M823.3 276.5 L815.0 286.9 L802.5 295.2 L796.3 309.7 L794.2 318.0 L775.5 330.5 L769.3 340.9 L752.7 365.8 L748.5 376.2 L752.7 390.7 L750.6 407.4 L745.4 420.0 M745.4 420.0 L758.9 409.4 L773.5 420.0 M696.6 405.3 L702.8 405.3 L702.8 408.4 L696.6 408.4Z M705.9 410.5 L709.1 410.5 L709.1 413.6 L705.9 413.6Z M713.2 410.5 L716.3 410.5 L716.3 413.6 L713.2 413.6Z M708.0 417.8 L715.3 417.8 L715.3 420.0 L708.0 420.0Z M1040.0 237.0 L1052.5 232.9 L1069.1 232.9 L1085.7 241.2 L1100.2 237.0 L1102.3 230.8 L1098.2 224.5 L1089.9 220.4 L1079.5 215.2 L1075.3 210.0 M1050.4 210.0 L1058.7 215.2 L1069.1 211.0 M1040.0 270.2 L1052.5 270.2 L1064.9 272.3 L1073.2 270.2 L1079.5 284.8 L1077.4 297.3 L1073.2 307.6 L1067.0 307.6 L1040.0 307.6 M1054.5 278.6 L1064.9 274.4 L1064.9 280.6 L1056.6 284.8Z M1058.7 320.1 L1069.1 336.7 L1083.6 359.6 L1096.1 380.4 L1106.5 397.0 L1118.9 420.0 M1075.3 305.6 L1071.2 322.2 L1073.2 326.3 L1081.6 345.0 L1096.1 365.8 L1104.4 382.4 L1121.0 401.1 L1129.3 420.0 M1156.3 316.0 L1164.7 318.0 L1173.0 332.6 L1179.2 347.1 L1185.4 357.5 L1202.0 363.7 L1208.3 343.0 L1212.4 355.4 L1231.1 370.0 L1222.8 386.6 L1212.4 397.0 L1189.6 405.3 L1173.0 413.6 L1156.3 415.7 L1143.9 420.0 M1156.3 316.0 L1168.8 320.1 L1185.4 334.7 L1208.3 340.9 L1218.7 349.2 L1243.6 351.3 L1260.2 351.3 L1272.7 351.3 L1285.1 363.7 L1295.5 367.9 L1291.4 376.2 L1303.8 388.7 L1318.4 405.3 L1326.7 420.0 M1131.4 216.2 L1135.6 222.5 L1137.6 232.9 L1148.0 241.2 L1152.2 251.6 L1160.5 259.9 L1168.8 264.0 L1185.4 261.9 M1156.3 216.2 L1168.8 226.6 L1177.1 237.0 L1175.0 251.6 L1185.4 261.9 M1434.7 355.4 L1445.1 384.5 L1455.5 409.4 L1465.9 413.6 M1542.8 390.7 L1549.0 397.0 L1555.2 392.8 L1553.1 386.6 M1601.6 249.5 L1597.4 250.5 L1587.0 254.7 L1582.9 251.6 L1580.8 242.2 L1576.6 241.2 L1570.4 249.5 L1562.1 254.7 L1574.5 264.0 L1593.2 266.1 L1582.9 276.5 L1580.8 282.7 L1587.0 288.9 L1591.2 299.3 L1603.6 307.6 L1607.8 320.1 L1609.9 326.3 L1605.7 343.0 L1601.6 355.4 L1589.1 367.9 M1601.6 249.5 L1603.6 259.9 L1616.1 264.0 L1622.3 272.3 L1628.6 286.9 L1643.1 281.7 L1643.1 272.3 L1632.7 259.9 L1620.2 253.6 L1617.1 249.5 L1626.5 241.2 L1624.4 230.8 L1634.8 227.7 L1645.2 224.5 L1651.4 210.0 M1610.9 355.4 L1618.2 350.2 L1621.3 353.3 L1620.2 367.9 L1616.1 373.1 L1609.9 363.7Z M1686.7 241.2 L1695.0 239.1 L1703.3 249.5 L1705.4 261.9 L1708.5 272.3 L1705.4 280.6 L1688.8 284.8 L1684.7 293.1 L1680.5 286.9 L1672.2 286.9 L1659.7 291.0 L1654.5 284.8 L1668.0 276.5 L1680.5 272.3 L1690.9 261.9 L1693.0 251.6Z M1651.4 293.1 L1657.6 290.0 L1666.0 293.1 L1663.9 307.6 L1659.7 308.7 L1653.5 299.3Z M1668.0 290.0 L1676.3 288.9 L1674.3 297.3 L1668.0 296.2Z M1678.4 210.0 L1688.8 220.4 L1705.4 222.5 L1707.5 226.6 L1695.0 232.9 L1684.7 237.0 L1678.4 226.6Z M1620.2 409.4 L1616.1 420.0 M261.8 420.0 L265.9 424.2 L278.4 430.4 L288.8 434.5 L295.0 432.5 L303.3 428.3 L317.9 424.2 L322.0 420.0 M322.0 420.0 L322.0 436.6 L322.0 455.3 L332.4 463.6 L342.8 463.6 L353.2 461.6 L359.4 465.7 L365.6 463.6 L371.9 451.2 L382.3 444.9 L394.7 440.8 L398.9 442.9 L392.6 447.0 L394.7 461.6 L396.8 461.6 L401.0 451.2 L398.9 442.9 L409.3 444.9 L425.9 451.2 L446.7 455.3 L457.1 457.4 L467.4 463.6 L477.8 474.0 L492.4 484.4 L506.9 486.5 L520.0 488.6 M324.1 461.6 L328.2 467.8 L336.6 471.9 L342.8 465.7 L353.2 467.8 L357.3 482.3 L357.3 494.8 L353.2 503.1 L346.9 513.5 L336.6 526.0 L332.4 536.3 L336.6 544.7 L332.4 555.0 L334.5 569.6 L349.0 582.0 L353.2 596.6 L361.5 611.1 L371.9 630.0 M457.1 457.4 L463.3 444.9 L467.4 432.5 L471.6 422.1 M477.8 432.5 L482.0 432.5 L482.0 436.6 L477.8 436.6Z M520.0 492.7 L526.2 503.1 L530.4 515.6 L528.3 528.0 L524.2 532.2 L520.0 534.3 M528.3 532.2 L538.7 539.5 L551.2 532.2 L561.6 536.3 L567.8 546.7 L582.3 544.7 L601.0 546.7 L611.4 557.1 L628.0 563.3 L633.2 575.8 L628.0 592.4 L617.6 607.0 L607.3 619.4 L607.3 630.0 M529.3 527.0 L535.6 524.9 L541.8 529.1 L539.7 536.3 L531.4 535.3Z M746.4 420.0 L748.5 430.4 L748.5 438.7 L758.9 449.1 L769.3 461.6 L773.5 474.0 L792.2 490.6 L806.7 494.8 L821.2 491.7 L837.9 492.7 L852.4 490.6 L873.2 488.6 L889.8 494.8 L906.4 496.9 L910.6 503.1 L908.5 517.6 L912.6 536.3 L927.2 557.1 L935.5 573.7 L941.7 602.8 L933.4 630.0 M748.5 434.5 L765.1 431.4 L754.8 436.6 L748.5 436.6 M1129.3 420.0 L1135.6 434.5 L1148.0 433.5 L1168.8 426.2 L1185.4 420.0 M1108.6 420.0 L1123.1 432.5 L1127.3 439.7 L1123.1 446.0 L1129.3 449.1 L1148.0 451.2 L1164.7 446.0 L1181.3 442.9 L1183.3 455.3 L1175.0 471.9 L1164.7 488.6 L1152.2 503.1 L1137.6 515.6 L1127.3 528.0 L1118.9 544.7 L1108.6 557.1 L1104.4 573.7 L1108.6 592.4 L1114.8 607.0 L1116.9 630.0 M1156.3 630.0 L1168.8 613.2 L1177.1 630.0 M1127.3 610.1 L1131.4 610.1 L1131.4 614.2 L1127.3 614.2Z M1131.4 615.3 L1139.7 615.3 L1139.7 619.4 L1131.4 619.4Z M1212.0 562.3 L1217.0 562.3 L1217.0 567.1 L1212.0 567.1Z M1316.3 490.6 L1324.6 490.6 L1324.6 498.9 L1316.3 498.9Z M1320.5 486.5 L1324.2 486.5 L1324.2 491.7 L1320.5 491.7Z M1324.6 420.0 L1335.0 440.8 L1345.4 463.6 L1351.6 469.9 L1359.9 463.6 L1368.2 440.8 L1372.4 420.0 M1368.2 461.6 L1372.4 459.5 L1380.7 474.0 L1378.6 484.4 L1370.3 484.4 L1367.2 471.9Z M1476.3 420.0 L1482.5 440.8 L1484.6 461.6 L1492.9 471.9 L1499.1 469.9 L1486.7 455.3 L1488.7 438.7 L1497.1 432.5 M1492.9 432.5 L1505.4 440.8 L1517.8 453.2 L1528.2 463.6 L1538.6 455.3 L1551.1 447.0 L1555.2 436.6 L1560.0 432.5 M1482.5 467.8 L1495.0 476.1 L1501.2 488.6 L1513.7 503.1 L1522.0 515.6 L1524.1 509.3 L1517.8 498.9 L1519.9 488.6 M1468.0 488.6 L1476.3 488.6 L1492.9 498.9 L1507.4 511.4 L1522.0 528.0 L1536.5 548.8 L1536.5 561.3 L1528.2 563.3 L1511.6 553.0 L1497.1 536.3 L1486.7 517.6 L1472.1 496.9Z M1534.4 569.6 L1549.0 573.7 L1560.0 577.9 M1544.8 580.0 L1560.0 582.0 M1555.2 515.6 L1560.0 511.4 M1606.7 467.8 L1611.9 457.4 L1622.3 449.1 L1621.3 459.5 L1609.9 467.8Z M1632.7 447.0 L1638.9 444.9 L1643.1 453.2 L1647.3 461.6 L1643.1 465.7 L1638.9 459.5 L1634.8 451.2 M1649.3 449.1 L1653.5 457.4 L1657.6 459.5 M1638.9 474.0 L1645.2 467.8 M1603.6 480.2 L1611.9 482.3 L1619.2 490.6 L1611.9 503.1 L1618.2 519.7 L1609.9 532.2 L1601.6 548.8 L1595.3 555.0 L1580.8 550.9 L1560.0 548.8 M1560.0 517.6 L1572.5 507.3 L1584.9 509.3 L1597.4 498.9 M1624.4 536.3 L1626.5 519.7 L1638.9 516.6 L1660.8 516.0 L1657.6 523.9 L1645.2 528.0 L1630.6 528.0 L1632.7 534.3 L1647.3 533.2 L1642.1 538.4 L1628.6 538.4Z M1675.3 517.6 L1680.5 510.4 L1684.7 512.4 L1678.4 518.7Z M1698.2 534.3 L1709.6 531.1 L1715.8 534.3 L1720.0 544.7 L1726.2 548.8 L1738.7 540.5 L1759.4 546.7 L1780.2 553.0 L1790.6 559.2 L1801.0 567.5 L1803.1 577.9 L1813.5 592.4 L1823.8 602.8 L1809.3 602.8 L1798.9 596.6 L1788.5 584.1 L1776.1 582.0 L1767.8 592.4 L1759.4 592.4 L1753.2 586.2 L1742.8 582.0 L1730.4 565.4 L1722.0 557.1 L1709.6 553.0 L1707.5 540.5 L1699.2 538.4Z M1821.8 544.7 L1828.0 546.7 L1838.4 555.0 L1836.3 561.3 L1819.7 573.7 L1811.4 572.7 L1809.3 567.5 L1821.8 565.4 L1832.2 557.1Z M1842.5 565.4 L1846.7 573.7 L1848.8 580.0 L1843.6 577.9Z M1855.0 575.8 L1861.2 580.0 L1863.3 584.1 L1857.1 582.0Z M1867.5 582.0 L1873.7 586.2 L1877.9 592.4 L1871.6 590.4Z M1877.9 586.2 L1881.0 586.2 L1884.1 602.8 L1882.0 604.9 L1876.8 594.5Z M1560.0 573.7 L1568.3 572.7 L1580.8 577.9 L1593.2 584.1 L1591.2 588.3 L1572.5 584.1 L1560.0 584.1Z M1601.6 586.2 L1609.9 585.2 L1614.0 590.4 L1605.7 591.4Z M1645.2 598.7 L1653.5 590.4 L1670.1 586.2 L1668.0 590.4 L1653.5 598.7Z M1651.4 630.0 L1663.9 624.6 L1676.3 630.0 M1680.5 630.0 L1684.7 617.4 L1705.4 609.1 L1726.2 615.3 L1720.0 630.0 M1757.4 630.0 L1763.6 607.0 L1767.8 607.0 L1774.0 619.4 L1782.3 630.0 M1714.8 471.9 L1718.9 470.9 L1718.9 477.1 L1714.8 477.1Z M1864.4 474.4 L1869.5 474.4 L1869.5 477.8 L1864.4 477.8Z M1956.8 473.0 L1962.0 474.0 L1962.0 477.8 L1956.8 477.8Z M1969.3 515.6 L1974.5 515.6 L1974.5 520.8 L1970.3 520.8Z M1925.6 529.1 L1930.8 529.1 L1930.8 533.2 L1925.6 533.2Z M1998.4 593.5 L2003.5 593.5 L2003.5 597.6 L1998.4 597.6Z M2047.2 620.5 L2056.5 620.5 L2052.4 627.8Z M401.0 650.0 L411.3 660.4 L413.4 681.2 L411.3 701.9 L413.4 722.7 L417.6 753.9 L419.7 774.7 L417.6 795.4 L423.8 812.0 L434.2 824.5 L438.4 839.1 L432.1 849.4 L440.4 860.0 M504.8 766.3 L513.1 770.5 L517.3 785.0 L511.1 795.4 L490.3 799.6 L492.4 812.0 L475.7 814.1 L486.1 826.6 L475.7 845.3 L486.1 860.0 M607.3 650.0 L603.1 666.6 L594.8 683.2 L582.3 688.4 L571.9 691.6 L557.4 699.9 L553.2 706.1 L555.3 716.5 L549.1 733.1 L538.7 749.7 L532.5 764.3 L524.2 770.5 L520.0 770.5 M931.3 650.0 L935.5 662.5 L945.9 681.2 L950.0 712.3 L956.3 726.9 L966.7 743.5 L970.8 758.0 L979.1 768.4 L999.9 765.3 L1010.3 767.4 L1029.0 758.0 L1040.0 747.6 M1024.8 733.1 L1033.1 727.9 L1038.3 733.1 L1031.1 739.3Z M1091.9 650.0 L1085.7 658.3 L1075.3 670.8 L1081.6 687.4 L1075.3 697.8 L1062.9 704.0 L1060.8 712.3 L1062.9 720.6 L1052.5 733.1 L1040.0 747.6 M1048.3 712.3 L1052.5 708.2 L1056.6 712.3 L1054.5 716.5Z M1135.6 650.0 L1135.6 666.6 L1127.3 679.1 L1127.3 695.7 L1137.6 706.1 L1152.2 701.9 L1158.4 687.4 L1162.6 670.8 L1168.8 650.0 M1216.6 665.6 L1221.8 665.6 L1221.8 670.8 L1216.6 670.8Z M1630.6 650.0 L1626.5 658.3 L1614.0 666.6 L1605.7 667.7 L1591.2 672.9 L1572.5 681.2 L1568.3 691.6 L1568.3 704.0 L1566.2 722.7 L1568.3 743.5 L1560.0 762.2 L1560.0 768.4 L1570.4 772.6 L1591.2 764.3 L1611.9 763.2 L1628.6 754.9 L1657.6 749.7 L1668.0 749.7 L1678.4 758.0 L1682.6 770.5 L1693.0 763.2 L1699.2 760.1 L1693.0 773.6 L1698.2 770.5 L1701.3 783.0 L1699.2 791.3 L1709.6 797.5 L1722.0 798.5 L1724.1 794.4 L1731.4 801.7 L1742.8 793.3 L1755.3 793.3 L1763.6 783.0 L1776.1 772.6 L1782.3 762.2 L1792.7 756.0 L1803.1 745.6 L1811.4 728.9 L1813.5 704.0 L1803.1 691.6 L1792.7 666.6 L1782.3 656.2 L1782.3 650.0 M1713.7 812.0 L1734.5 816.2 L1730.4 824.5 L1715.8 832.8 L1709.6 828.7Z M1818.6 851.5 L1819.7 843.2 L1830.1 837.0 L1850.9 828.7 L1865.4 820.4 L1879.9 811.0 L1884.1 816.2 L1882.0 822.4 L1867.5 832.8 L1850.9 841.1 L1834.2 851.5 L1821.8 852.6Z M1890.3 816.2 L1894.5 805.8 L1909.0 793.3 L1909.0 772.6 L1913.2 772.6 L1913.2 783.0 L1925.6 791.3 L1923.6 799.6 L1909.0 810.0 L1896.6 818.3Z M1888.2 660.4 L1892.4 662.5 L1906.9 681.2 L1906.9 685.3 L1902.8 685.3 L1888.2 668.7Z M2019.1 668.7 L2023.3 666.6 L2025.4 670.8 L2021.2 672.9Z M1979.7 650.0 L1988.0 652.1 L1984.9 656.2 L1979.7 655.2Z M2031.6 654.2 L2037.8 650.0 M358.3 610.0 L366.1 616.2 L373.8 633.3 L389.3 641.1 L400.2 648.8 L408.0 655.0 L412.6 669.9 M616.1 610.0 L609.8 614.7 L606.7 620.9 L608.3 628.6 L606.7 641.1 L603.6 656.6 L600.5 669.9 M940.9 610.0 L934.7 620.9 L930.0 636.4 L930.0 647.3 L931.6 656.6 L939.3 669.9 M1029.4 610.0 L1040.3 617.8 L1046.5 616.2 L1037.2 610.0 M1074.4 610.0 L1076.0 624.0 L1082.2 631.7 L1083.8 638.0 L1077.5 642.6 L1072.9 636.4 L1074.4 628.6 L1074.4 610.0 M1113.3 610.0 L1116.4 625.5 L1111.7 638.0 L1093.1 647.3 L1086.9 655.0 L1074.4 669.9 M1163.0 669.9 L1169.2 647.3 L1175.4 633.3 L1173.8 622.4 L1169.2 613.1 L1163.0 622.4 L1149.0 636.4 L1138.1 639.5 L1135.0 648.8 L1136.6 669.9 M1127.2 610.0 L1131.9 610.0 L1131.9 614.7 L1127.2 614.7Z M1131.9 614.7 L1139.7 614.7 L1139.7 619.3 L1131.9 619.3Z M1597.1 669.9 L1612.6 665.9 L1626.6 658.1 L1632.8 645.7 L1640.6 647.3 L1642.1 641.1 L1651.5 636.4 L1653.0 628.6 L1665.4 624.0 L1679.4 632.5 L1681.0 625.5 L1687.2 616.2 L1705.8 610.0 M1710.5 610.0 L1724.4 613.1 L1727.5 617.8 L1719.8 627.1 L1721.3 634.8 L1744.6 650.4 L1757.0 636.4 L1758.6 622.4 L1763.3 610.0 M1769.5 610.0 L1772.6 619.3 L1781.9 630.2 L1783.4 641.1 L1781.9 655.0 L1791.2 665.9 L1794.3 669.9 M1915.4 631.7 L1924.8 630.2 L1926.3 641.1 L1921.6 650.4 L1917.0 641.1Z M1889.0 659.7 L1892.1 659.7 L1896.8 669.9 M275.3 393.3 L281.6 382.2 L286.3 377.5 L297.4 375.1 L306.9 377.5 L302.2 393.3 L297.4 404.4 L291.1 413.9 L297.4 415.4 L321.1 415.4 L323.5 424.9 L321.1 432.8 L320.3 455.0 L329.1 461.3 L333.8 464.5 L341.7 461.3 L348.0 466.1 L359.1 466.1 L370.2 450.3 L381.3 443.9 L395.5 440.8 L398.7 443.9 L393.9 450.3 L395.5 461.3 L398.7 456.6 M327.5 472.4 L337.0 469.2 L344.9 467.7 L351.2 472.4 L355.9 488.2 M187.4 382.2 L191.4 391.7 L199.3 398.0 M245.2 383.8 L249.9 393.3 M1225.0 350.8 L1242.8 349.9 L1265.9 350.8 L1278.4 357.9 L1289.1 366.8 L1296.2 368.6 L1292.6 373.9 M1317.6 402.4 L1324.7 416.6 L1333.6 440.0 M1225.0 363.2 L1232.1 372.1 L1225.0 382.8 M1365.6 438.0 L1369.2 430.9 M1381.6 404.2 L1390.5 397.1 L1395.9 391.7 M1438.6 382.8 L1447.5 391.7 L1456.4 413.1 L1463.5 416.6 L1472.4 407.7 L1479.5 382.8 L1490.2 375.7 M1606.0 310.0 L1611.3 317.1 L1609.5 331.4 L1604.2 347.4 L1598.8 359.9 L1588.2 367.0 L1570.4 375.9 L1556.1 377.7 L1550.8 386.6 L1534.7 402.6 L1541.9 409.7 M1543.6 390.1 L1556.1 386.6 L1557.9 393.7 L1549.0 399.0 L1544.5 397.3Z M1554.3 441.8 L1549.0 448.9 L1538.3 452.5 L1527.6 456.0 L1529.4 466.7 L1524.0 452.5 L1516.9 448.9 L1509.8 441.8 L1506.2 432.9 L1493.8 432.9 L1490.2 445.4 L1488.4 457.8 L1484.9 470.3 L1497.3 475.6 M1440.3 384.8 L1447.5 388.4 L1456.4 399.0 L1458.2 415.1 L1467.1 413.3 L1474.2 408.0 M1479.5 425.8 L1483.1 438.2 L1484.9 461.4 L1495.6 473.8 M1611.3 352.7 L1620.2 351.0 L1622.0 358.1 L1620.2 370.6 L1616.7 372.3 L1610.4 361.6Z M1618.4 416.9 L1618.4 409.7 L1630.9 406.2 M1648.7 434.7 L1639.8 443.6 L1634.5 452.5 L1639.8 461.4 L1645.2 456.0 L1648.7 468.5 L1639.8 475.6 M1648.7 448.9 L1652.3 457.8 M1607.8 466.7 L1622.0 450.7 L1621.1 456.0 L1609.5 468.5Z M1604.2 481.0 L1618.4 490.1" fill="none" stroke="#111" stroke-width="2.05" stroke-linejoin="round"/></g><g mask="url(#cp0)"><path d="M1035.0 371.9 L1066.2 371.9 L1069.1 374.2 L1079.5 364.5 M1098.8 401.6 L1089.9 409.0 L1088.4 423.9 L1101.8 423.9 L1118.1 428.3 L1125.5 438.7 M1088.4 423.9 L1079.5 441.7 L1072.1 458.0 L1073.6 462.5 L1064.7 470.0 M1121.1 444.6 L1125.5 440.2 L1131.5 441.7 M1127.0 409.0 L1135.9 404.6 L1152.2 407.6 L1158.2 403.1 L1171.5 395.7 L1186.4 392.7 L1202.7 388.3 L1207.1 376.4 L1202.7 369.0 L1190.8 367.5 L1183.4 363.0 L1177.5 355.6 M1184.9 394.2 L1192.3 409.0 M1202.7 369.0 L1210.1 355.6 M1130.0 320.0 L1138.9 323.0 L1147.8 323.0 L1155.2 320.0 M1235.3 320.0 L1245.7 328.9 L1241.3 346.7" fill="none" stroke="#3a3a3a" stroke-width="1.6" stroke-linejoin="round"/><path d="M1058.7 321.5 L1064.7 328.9 L1075.1 349.7 L1081.0 364.5 L1089.9 376.4 L1091.4 388.3 L1098.8 400.1 L1104.7 409.0 L1107.7 416.5 L1118.1 423.9 L1125.5 434.3 L1130.0 440.2 M1070.6 328.9 L1073.6 324.5 L1076.5 334.8 L1091.4 354.1 L1100.3 366.0 L1103.3 376.4 L1109.2 388.3 L1116.6 395.7 L1124.0 407.6 L1127.0 412.0 L1130.0 423.9 L1134.4 437.2 M1058.7 321.5 L1066.2 327.4 L1070.6 330.4 M1130.0 440.2 L1132.9 447.6 L1138.9 453.6 M1149.3 450.6 L1161.1 447.6 L1180.4 443.2 L1183.4 449.1 L1180.4 458.0 L1177.5 470.0 M1134.4 437.2 L1147.8 435.7 L1165.6 426.8 L1183.4 420.9 L1193.8 409.0 L1205.6 404.6 L1216.0 395.7 L1223.5 382.3 L1232.4 373.4 L1229.4 367.5 L1219.0 360.1 L1211.6 354.1 L1210.1 343.7 L1207.1 342.3 L1198.2 354.1 L1192.3 357.1 L1183.4 355.6 L1177.5 349.7 L1171.5 348.2 L1168.6 342.3 L1165.6 334.8 L1158.2 325.9 L1155.2 320.0 M1168.6 320.0 L1176.0 331.9 L1189.3 339.3 L1207.1 337.8 L1216.0 348.2 L1224.9 351.2 L1239.8 350.4 L1250.2 349.7 L1265.0 349.7 M1170.0 342.3 L1174.5 340.8 L1176.0 346.7 L1171.5 349.7Z" fill="none" stroke="#111" stroke-width="2.05" stroke-linejoin="round"/></g><g mask="url(#cp1)"><path d="" fill="none" stroke="#3a3a3a" stroke-width="1.6" stroke-linejoin="round"/><path d="M295.0 52.2 L307.7 53.0 L326.7 60.1 L328.2 64.9 L350.4 64.1 L355.1 71.2 L359.9 63.3 L374.1 60.1 L390.0 64.9 L410.5 68.1 L423.2 61.7 L431.1 57.0 L432.7 52.2 L429.5 47.5 L443.8 42.7 L446.9 47.5 L448.5 53.8 L454.9 58.6 L456.4 66.5 L465.9 60.1 L473.9 53.8 L486.5 54.6 L488.1 61.7 L481.8 69.6 L472.3 72.8 L453.3 74.4 L442.2 77.6 L437.5 76.0 L440.6 80.7 L429.5 85.5 L416.9 88.6 L413.7 95.0 L390.0 104.5 L377.3 114.0 L375.7 120.3 L382.1 129.8 L397.9 136.1 L420.0 144.0 L416.9 160.0 M432.7 160.0 L437.5 147.2 L453.3 137.7 L461.2 126.6 L462.8 117.1 L470.7 107.6 L475.4 98.1 L484.9 96.5 L500.8 101.3 L510.3 110.8 L508.7 117.1 L515.0 123.5 L526.1 117.1 L537.2 110.8 L538.7 123.5 L541.9 139.3 L543.5 148.8 L556.2 150.4 L560.9 160.0 M443.8 88.6 L451.7 79.1 L464.4 82.3 L469.1 90.2 L467.5 93.4 L459.6 90.2 L446.9 90.2Z M486.5 82.3 L492.8 79.1 L505.5 80.7 L513.4 74.4 L532.4 71.2 L529.3 63.3 L521.3 50.6 L510.3 47.5 L500.8 50.6 L484.9 49.1 L469.1 47.5 L467.5 39.6 L475.4 33.2 L492.8 29.3 L505.5 31.7 L516.6 36.4 L530.8 38.0 L538.7 45.9 L551.4 49.1 L556.2 57.0 L564.1 64.9 L567.2 74.4 L559.3 80.7 L545.1 74.4 L543.5 88.6 L535.6 91.8 L530.8 90.2 L534.0 98.1 L522.9 99.7 L515.0 95.0 L507.1 82.3 L494.4 85.5Z M331.4 50.6 L342.5 44.3 L347.2 42.7 L334.6 41.2 L339.3 33.2 L363.1 31.7 L371.0 34.8 L382.1 33.2 L385.2 39.6 L391.5 33.2 L401.0 31.7 L397.9 42.7 L404.2 50.6 L393.1 57.0 L374.1 55.4 L358.3 61.7 L342.5 58.6 L333.0 53.8Z M307.7 38.0 L323.5 28.5 L342.5 24.5 L358.3 26.9 L363.1 31.7 L347.2 33.2 L334.6 38.0 L315.6 46.7Z M415.3 34.0 L426.4 30.1 L443.8 27.7 L443.8 33.2 L435.9 39.6 L426.4 42.7 L420.0 38.0Z M446.9 33.2 L456.4 28.5 L469.1 28.5 L469.1 33.2 L459.6 36.4 L450.1 38.0Z M409.0 57.0 L418.5 52.2 L428.0 53.8 L423.2 58.6 L413.7 61.7Z M477.0 19.0 L484.9 14.2 L497.6 17.4 L505.5 19.0 L529.3 20.6 L529.3 23.7 L519.8 27.7 L500.8 25.3 L478.6 23.7Z M503.9 9.5 L522.9 7.9 L529.3 14.2 L510.3 14.2 L503.9 11.1 M500.8 0.0 L510.3 3.2 L529.3 3.2 L534.0 1.6 M538.7 17.4 L556.2 7.9 L575.0 0.0 M486.5 39.6 L492.8 31.7 M333.0 47.5 L350.4 49.1" fill="none" stroke="#111" stroke-width="2.05" stroke-linejoin="round"/></g><g mask="url(#cp2)"><path d="M1255.0 151.2 L1267.4 155.0 L1276.1 150.6 L1286.1 157.5 L1289.8 161.2 L1299.7 164.9 L1304.7 172.4 L1310.9 171.1 L1322.1 173.0 L1344.4 182.3 L1354.4 184.8 M1354.4 184.8 L1364.3 178.6 L1371.8 174.2 L1379.2 173.0 L1397.9 178.6 L1406.6 178.6 L1410.3 176.1 L1406.6 171.1 L1411.5 164.9 L1422.7 168.0 L1436.4 174.8 L1443.8 177.3 L1452.5 176.1 L1466.2 181.1 L1478.6 184.2 L1488.5 183.5 L1498.5 179.2 L1515.9 182.9 L1527.0 179.2 L1527.0 172.4 L1522.1 159.9 L1530.8 155.0 L1540.7 154.3 L1553.1 158.7 L1565.6 172.4 L1575.0 179.8 M1354.4 184.8 L1346.9 191.0 L1348.2 197.2 L1339.5 199.7 L1332.0 208.4 L1323.3 214.6 L1329.5 224.5 L1327.0 234.5 L1319.6 240.1 M1354.4 184.8 L1361.8 192.2 L1373.0 196.0 L1381.7 208.4 L1391.6 214.6 L1400.3 213.4 L1414.0 219.6 L1426.4 230.7 L1436.4 229.5 L1460.0 235.7 L1473.6 236.3 L1483.6 232.0 L1501.0 229.5 L1510.9 220.8 L1505.9 214.6 L1513.4 213.4 L1533.3 202.2 L1544.4 200.3 L1528.3 193.5 L1518.4 191.0 L1514.6 183.5 M1276.1 229.5 L1287.3 229.5 L1298.5 225.8 L1314.6 227.0 L1327.0 232.0 M1255.0 237.0 L1267.4 239.4 L1276.1 232.0 L1277.4 229.5 M1271.1 235.7 L1279.8 239.4 L1289.8 240.1" fill="none" stroke="#3a3a3a" stroke-width="1.6" stroke-linejoin="round"/><path d="" fill="none" stroke="#111" stroke-width="2.05" stroke-linejoin="round"/></g><g mask="url(#cp3)"><path d="M175.0 306.9 L198.7 304.0 L206.6 307.9 L214.6 319.8 L224.4 317.8 L232.4 321.8 L242.2 341.5 L248.2 343.5 M289.7 393.0 L293.7 402.8 L289.7 414.7 M403.4 388.0 L402.5 400.9 M386.6 456.2 L388.6 472.1 L402.5 480.0 L416.3 482.0 L420.3 500.0 M461.8 464.2 L465.7 472.1 L461.8 489.9 L463.8 500.0 M483.5 483.9 L481.6 497.8 L482.6 500.0 M501.3 487.9 L505.3 500.0" fill="none" stroke="#3a3a3a" stroke-width="1.6" stroke-linejoin="round"/><path d="M248.2 343.5 L252.1 329.7 L264.0 323.7 L279.8 316.8 L297.6 321.8 L305.5 313.8 L317.4 311.9 L337.2 317.8 L343.1 325.7 L345.1 339.6 L351.0 349.4 L355.0 343.5 L355.0 319.8 L357.0 305.9 L362.9 300.0 M248.2 343.5 L244.2 357.4 L246.2 383.1 L250.2 393.0 M277.8 391.0 L285.8 379.1 L293.7 375.2 L305.5 377.1 L301.6 389.0 L293.7 410.8 L291.7 416.7 L313.4 414.7 L321.4 416.7 L323.3 428.6 L321.4 438.4 L323.3 456.2 L333.2 464.2 L353.0 462.2 L358.9 466.1 L368.8 452.3 L382.7 442.4 L392.6 440.4 L400.5 442.4 L394.5 444.4 L394.5 458.2 L398.5 446.4 L406.4 444.4 L422.2 452.3 L436.1 454.3 L455.9 458.2 L467.7 466.1 L483.5 478.0 L501.3 485.9 L515.2 489.9 L527.1 500.0 M281.8 428.6 L289.7 424.6 L295.6 428.6 L293.7 432.5 L283.8 432.5Z M175.0 347.5 L184.9 361.3 L188.8 383.1 L198.7 394.9 M266.0 420.6 L281.8 430.5 L291.7 432.5 M329.3 470.1 L337.2 474.1 L349.1 468.1 L357.0 474.1 L357.0 500.0 M362.9 337.6 L374.8 336.6 L376.7 341.5 L370.8 347.5 L366.9 355.4 L362.9 349.4 L364.9 343.5Z M380.7 353.4 L384.7 353.4 L384.7 357.4 L380.7 357.4Z M380.7 361.3 L385.6 361.3 L385.6 365.3 L380.7 365.3Z M382.7 371.2 L390.6 371.2 L390.6 375.2 L382.7 375.2Z M321.4 369.2 L325.3 365.3 L343.1 364.3 L362.9 371.2 L376.7 379.1 L387.6 383.1 L386.6 387.0 L364.9 387.0 L358.9 379.1 L343.1 373.2 L325.3 374.2Z M356.0 395.9 L364.9 395.9 L370.8 398.9 L370.8 401.9 L358.9 401.9Z M379.7 396.9 L392.6 394.9 L394.5 388.0 L414.3 388.0 L421.2 393.9 L416.3 396.9 L404.4 396.9 L400.5 401.9 L392.6 400.9 L379.7 398.9Z M426.2 396.9 L436.1 395.9 L438.1 400.9 L428.2 401.9Z M448.9 395.3 L451.9 395.3 L451.9 398.3 L448.9 398.3Z M450.9 403.8 L454.9 403.8 L454.9 407.8 L450.9 407.8Z M457.8 401.9 L461.8 401.9 L461.8 405.8 L457.8 405.8Z M464.8 401.9 L468.7 401.9 L468.7 405.8 L464.8 405.8Z M459.8 410.8 L464.8 410.8 L464.8 414.7 L459.8 414.7Z M466.7 414.7 L470.7 414.7 L470.7 418.7 L466.7 418.7Z M470.7 421.6 L474.6 421.6 L474.6 426.6 L470.7 426.6Z M465.7 428.6 L469.7 428.6 L469.7 432.5 L465.7 432.5Z M462.8 434.5 L466.7 434.5 L466.7 438.4 L462.8 438.4Z M460.8 440.4 L464.8 440.4 L464.8 444.4 L460.8 444.4Z M464.8 446.4 L468.7 446.4 L468.7 450.3 L464.8 450.3Z M456.8 452.3 L463.8 452.3 L463.8 458.2 L456.8 458.2Z M477.6 432.5 L482.6 432.5 L483.5 436.5 L478.6 437.5Z" fill="none" stroke="#111" stroke-width="2.05" stroke-linejoin="round"/></g><g mask="url(#cp4)"><path d="M808.5 230.8 L822.4 234.9 L814.1 260.0 M851.5 222.5 L862.5 228.0 L876.4 229.4 M879.1 171.2 L884.7 176.8 L895.8 182.3 L902.7 185.1 L905.5 192.0 L902.7 195.5 L895.8 203.1 L899.9 207.2 L901.3 216.9 L902.7 219.7 M902.7 195.5 L911.0 194.8 L919.3 196.8 L926.2 198.2 L938.7 194.8 L948.4 192.0 L959.4 187.8 L965.0 190.6 L970.5 190.6 L988.5 183.7 M899.9 207.2 L909.6 204.5 L917.9 201.7 L926.2 199.6 L937.3 203.1 L953.9 200.3 M940.1 203.1 L955.3 198.9 L965.0 205.8 L971.9 203.1 L983.0 200.3 L988.5 192.0 L989.9 183.7 M948.4 149.1 L948.4 161.5 L953.9 178.1 L959.4 185.1 M977.4 146.3 L984.4 144.9 L992.7 147.7 L992.7 156.0 L995.4 167.1 L995.4 178.1 L991.3 186.5 L988.5 192.0 M992.7 147.7 L998.2 154.6 L1009.3 151.8 L1012.1 139.4 L1009.3 129.7 L1006.5 122.8 M995.4 167.1 L1009.3 165.7 L1020.4 167.1 L1037.0 162.9 L1034.2 151.8 L1028.7 143.5 L1013.4 139.4 M989.9 192.0 L1012.1 190.6 L1017.6 190.6 L1027.3 197.5 L1028.7 210.0 M1037.0 162.9 L1048.1 162.9 L1055.0 171.2 L1081.3 179.5 L1089.6 187.8 L1081.3 197.5 L1075.7 205.8 L1061.9 210.0 M988.5 193.4 L989.9 203.1 L999.6 205.8 L1006.5 219.7 L1027.3 219.7 M955.3 208.6 L971.9 207.2 L978.8 214.1 L992.7 219.7 L994.1 228.0 L989.9 233.5 L978.8 230.8 L970.5 225.2 M973.3 207.2 L971.9 225.2 L976.1 230.8 L981.6 244.6 M981.6 230.8 L992.7 233.5 L1006.5 237.7 L1020.4 234.9 L1028.7 240.5 M952.5 214.1 L959.4 222.5 L971.9 225.2" fill="none" stroke="#3a3a3a" stroke-width="1.6" stroke-linejoin="round"/><path d="M809.9 149.1 L822.4 143.5 L833.5 144.2 L834.8 147.7 L830.7 153.2 L830.7 164.3 L822.4 167.1 L809.9 169.8 L808.5 161.5 L810.6 156.0Z M837.6 132.5 L843.1 125.5 L848.7 124.8 L854.2 130.4 L848.7 135.2 L851.5 140.8 L859.8 147.7 L862.5 154.6 L872.2 160.2 L873.6 164.3 L868.1 171.2 L857.0 172.6 L844.5 174.0 L833.5 176.8 L840.4 171.2 L845.9 168.5 L837.6 165.7 L840.4 158.8 L839.0 151.8 L843.1 147.7 L837.6 139.4Z M898.5 120.0 L905.5 124.2 L916.5 124.8 L922.1 120.0 M923.4 121.4 L917.9 126.9 L911.0 132.5 L909.6 142.2 L912.4 147.7 L920.7 150.5 L924.8 146.3 L922.1 136.6 M875.0 171.2 L881.9 165.7 L893.0 158.8 L899.9 154.6 L909.6 152.5 L920.7 151.2 L927.6 154.6 L934.5 151.8 L948.4 149.1 L958.1 147.7 L966.4 149.1 L974.7 144.9 L977.4 136.6 L978.8 128.3 L981.6 122.8 L989.9 120.0 M981.6 122.8 L984.4 124.2 L991.3 128.3 L989.9 131.1 L981.6 133.8 L977.4 136.6 M875.0 171.2 L865.3 175.4 L848.7 185.1 L837.6 187.8 L836.2 192.0 L848.7 197.5 L852.8 205.8 L851.5 222.5 L808.5 221.1 L807.2 230.8 L804.4 260.0 M876.4 229.4 L881.9 225.2 L901.3 222.5 L912.4 216.9 L917.9 225.2 L924.8 233.5 L937.3 241.8 L951.1 248.8 L953.9 255.7 L955.3 260.0 M933.1 211.4 L937.3 216.9 L947.0 226.6 L958.1 233.5 L967.8 241.8 L969.1 246.0 L963.6 247.4 L958.1 251.5 M933.1 211.4 L940.1 210.0 L951.1 216.9 L960.8 225.2 L971.9 236.3 L978.8 244.6 L981.6 252.9 L984.4 260.0 M1028.7 210.0 L1025.9 219.7 L1027.3 234.9 L1031.4 240.5 L1020.4 244.6 L1012.1 260.0 M1028.7 210.0 L1042.5 201.7 L1052.2 205.8 L1055.0 215.5 L1064.7 210.0 L1068.8 208.6 L1075.7 212.8 L1086.8 219.7 L1099.3 225.2 L1103.4 234.9 L1097.9 239.1 L1086.8 241.8 L1073.0 234.9 L1052.2 233.5 L1032.8 240.5 M1089.6 222.5 L1103.4 225.2 L1117.3 230.8 L1135.0 234.9 M1135.0 172.6 L1127.0 178.1 L1125.6 185.1 L1131.1 194.8 L1135.0 197.5 M911.0 229.4 L916.5 226.6 L917.9 234.9 L912.4 236.3Z M908.2 241.8 L915.1 240.5 L917.9 252.9 L911.0 255.0 L907.5 247.4Z M868.1 254.3 L873.6 250.1 L879.1 247.4 L880.5 250.1 L870.8 255.7Z M883.3 246.0 L886.8 246.0 L886.8 248.8 L883.3 248.8Z M978.8 120.0 L984.4 122.8" fill="none" stroke="#111" stroke-width="2.05" stroke-linejoin="round"/></g><g mask="url(#cp5)"><path d="M315.0 185.1 L328.1 183.9 L344.7 192.2 L338.7 199.4 M391.0 230.2 L402.9 221.9 L417.1 216.0 L429.0 211.2 L449.2 211.2 L463.4 197.0 L471.7 194.6 L475.3 200.5 L472.9 211.2 L476.5 213.6" fill="none" stroke="#3a3a3a" stroke-width="1.6" stroke-linejoin="round"/><path d="M404.0 140.0 L419.5 144.7 L415.9 155.4 L415.9 163.7 L420.7 169.7 L429.0 166.1 L433.7 155.4 L439.7 145.9 L453.9 140.0 M338.7 199.4 L348.2 192.2 L367.2 186.9 L376.7 191.1 L379.7 195.8 L379.1 202.9 L370.8 202.9 L360.1 201.7 L350.6 199.4 L345.9 201.7Z M344.7 231.4 L349.4 236.2 L355.4 232.6 L360.1 220.7 L368.4 211.2 L379.1 207.7 L372.0 206.5 L361.3 210.0 L353.0 217.2 L347.1 227.9Z M379.1 208.9 L386.2 204.1 L393.4 204.1 L399.3 211.2 L395.7 216.0 L386.2 218.4 L381.5 221.9 L375.5 220.7 L376.7 214.8 L380.3 211.2Z M374.4 236.2 L379.1 229.0 L388.6 226.7 L391.0 230.2 L381.5 235.0Z M402.9 221.9 L408.8 218.4 L415.9 219.5 L412.4 223.1 L405.2 223.7Z M410.0 251.6 L419.5 246.9 L424.2 240.9 L445.6 233.8 L448.0 225.5 L450.3 223.1 L472.9 212.4 L476.5 216.0 L478.8 221.9 L495.5 216.0 L514.5 207.7 L512.1 205.3 L502.6 206.5 L493.1 201.7 L490.7 195.8 L499.0 185.1 L486.0 182.7 L469.3 191.1 L468.2 189.9 L486.0 181.6 L500.2 175.6 L520.4 176.8 L540.6 170.9 L557.2 161.4 L559.6 154.2 L552.4 149.5 L544.1 149.5 L540.6 140.0 M526.3 192.2 L537.0 180.4 L551.3 172.1 L551.3 181.6 L559.6 183.9 L563.1 192.2 L552.4 195.8 L534.6 195.2Z M481.2 210.0 L487.1 208.9 L490.7 210.0 L487.1 212.4Z" fill="none" stroke="#111" stroke-width="2.05" stroke-linejoin="round"/></g><g mask="url(#cp6)"><path d="M808.7 230.6 L816.6 234.5 L823.0 235.3 L819.0 244.8 L816.6 254.3 L813.5 265.4 M850.7 223.4 L857.8 227.4 L866.5 229.0 L873.6 229.8 L879.1 228.2 M846.7 282.8 L847.5 290.0 M906.8 270.9 L909.2 277.2 L903.7 290.0 M899.7 210.0 L903.7 217.9" fill="none" stroke="#3a3a3a" stroke-width="1.6" stroke-linejoin="round"/><path d="M852.2 210.0 L851.5 218.7 L849.1 223.4 L832.5 223.4 L823.0 221.1 L811.9 220.7 L807.9 224.2 L807.2 230.6 L808.7 233.7 L806.4 243.2 L804.8 254.3 L804.0 263.8 L805.6 267.0 L813.5 267.0 L823.8 273.3 L832.5 270.1 L843.5 270.1 L849.9 267.0 L857.8 259.1 L859.4 252.7 L861.7 244.8 L868.1 239.3 L874.4 236.1 L879.9 233.7 L879.9 228.2 L883.9 224.2 L889.4 225.0 L898.9 224.2 L903.7 221.1 L908.4 217.9 L915.0 215.5 M868.9 254.3 L872.0 250.3 L875.2 247.2 L880.7 248.0 L879.9 252.7 L875.2 253.1 L871.2 254.3Z M883.1 245.6 L886.3 245.6 L886.7 248.8 L883.5 248.8Z M823.8 274.9 L819.0 281.2 L812.7 290.0 M823.8 274.9 L832.5 280.4 L845.1 282.0 L856.2 275.7 L864.1 271.7 L876.0 268.5 L884.7 268.5 L887.1 270.1 L906.8 270.1 L911.6 267.8 L915.0 266.2 M915.0 226.6 L910.8 229.0 L911.6 235.3 L915.0 236.9 M915.0 239.3 L907.6 242.4 L908.4 249.6 L911.6 255.1 L915.0 254.3" fill="none" stroke="#111" stroke-width="2.05" stroke-linejoin="round"/></g><g mask="url(#cp7)"><path d="M1476.1 360.7 L1482.5 375.0 L1490.4 376.5 M1490.4 378.1 L1480.9 387.6 L1476.1 397.1 L1473.0 405.0 M1487.2 422.4 L1488.8 440.0 M1509.4 427.2 L1512.5 440.0 M1525.2 390.8 L1530.0 401.9 L1539.4 409.8 M1435.0 322.7 L1444.5 327.5" fill="none" stroke="#3a3a3a" stroke-width="1.6" stroke-linejoin="round"/><path d="M1580.6 280.0 L1583.8 284.7 L1591.7 291.1 L1599.6 302.2 L1605.9 308.5 L1605.9 314.8 L1610.7 319.6 L1609.1 330.6 L1604.3 348.0 L1599.6 357.5 L1590.1 367.0 L1577.4 371.8 L1558.4 376.5 L1553.7 381.3 M1544.2 390.8 L1548.9 387.6 L1556.9 389.2 L1555.3 395.5 L1545.8 400.3 L1542.6 395.5Z M1610.7 359.1 L1615.4 351.2 L1620.2 351.2 L1621.7 359.1 L1620.2 370.2 L1617.0 371.8 L1610.7 365.5Z M1624.9 280.0 L1628.1 286.3 L1640.7 281.6 L1643.9 280.0 M1653.4 289.5 L1651.8 295.8 L1656.6 303.7 L1659.7 308.5 L1664.5 308.5 L1666.0 299.0 L1662.9 291.1Z M1669.2 286.3 L1675.5 286.3 L1677.1 292.7 L1670.8 295.8 L1666.0 292.7Z M1681.9 280.0 L1688.2 286.3 L1695.0 283.2 M1435.0 381.3 L1444.5 387.6 L1450.8 397.1 L1455.6 409.8 L1460.3 416.1 L1466.7 412.9 L1471.4 408.2 M1477.7 422.4 L1482.5 440.0 M1493.6 433.5 L1501.5 438.3 L1504.6 440.0 M1618.6 409.8 L1617.0 417.7 L1620.2 422.4" fill="none" stroke="#111" stroke-width="2.05" stroke-linejoin="round"/></g><g mask="url(#cp8)"><path d="M1575.8 180.0 L1589.6 185.5 L1603.5 192.5 L1610.4 195.9 L1615.9 192.5 L1622.8 190.4 L1627.0 193.8 L1627.0 202.2 L1629.8 204.9 L1620.1 213.2 L1624.2 222.9 L1625.6 227.1 M1596.5 247.8 L1607.6 235.4 L1621.5 228.5 L1625.6 227.1 M1615.9 263.1 L1624.2 258.9" fill="none" stroke="#3a3a3a" stroke-width="1.6" stroke-linejoin="round"/><path d="M1650.5 180.0 L1653.3 198.0 L1649.2 214.6 L1640.8 227.1 L1629.8 226.4 L1628.4 227.1 M1596.5 249.2 L1606.2 257.5 L1607.6 261.7 L1615.9 263.1 L1621.5 267.2 L1624.2 276.9 L1629.8 286.6 L1643.6 281.1 L1640.8 268.6 L1632.5 261.7 L1620.1 253.4 L1618.7 249.2 L1625.6 245.1 L1624.2 235.4 L1628.4 227.1 M1596.5 249.2 L1586.8 254.8 L1582.7 249.2 L1577.2 240.9 L1563.3 254.8 L1575.8 265.8 L1593.8 265.8 L1582.7 276.9 L1582.7 283.8 L1589.6 290.8 L1593.8 300.5 L1603.5 307.4 L1607.6 320.0 M1657.5 180.0 L1665.8 193.8 L1672.7 204.9 L1681.0 204.9 L1676.8 198.0 L1669.9 185.5 L1668.5 180.0Z M1678.2 210.5 L1686.5 217.4 L1696.2 220.2 L1707.3 224.3 L1705.9 228.5 L1699.0 232.6 L1692.1 229.8 L1686.5 235.4 L1679.6 229.8 L1678.2 221.5Z M1686.5 240.9 L1690.7 239.5 L1699.0 243.7 L1704.5 252.0 L1707.3 265.8 L1708.7 274.2 L1704.5 282.5 L1689.3 283.8 L1685.2 293.5 L1679.6 288.0 L1675.5 285.2 L1665.8 285.2 L1656.1 286.6 L1654.7 282.5 L1669.9 276.9 L1683.8 268.6 L1693.5 258.9 L1687.9 245.1Z M1651.9 290.8 L1657.5 289.4 L1664.4 294.9 L1663.0 308.8 L1658.8 308.8 L1651.9 297.7Z M1667.2 289.4 L1675.5 289.4 L1675.5 294.9 L1669.9 297.7 L1667.2 294.9Z" fill="none" stroke="#111" stroke-width="2.05" stroke-linejoin="round"/></g><g mask="url(#cp9)"><path d="M1054.0 170.0 L1066.7 174.7 L1082.5 179.5 L1088.8 187.4 L1082.5 196.1 L1080.9 197.7 M1125.2 179.5 L1126.8 190.6 L1137.9 200.1 L1145.8 200.9 M1125.2 179.5 L1130.0 171.6 L1137.9 170.0 M1137.9 170.0 L1171.1 174.7 L1201.2 171.6 M1183.8 214.3 L1201.2 209.6 L1237.6 222.2 L1259.7 239.6 L1272.4 234.9 L1295.0 239.6 M1183.8 214.3 L1188.5 236.5 L1205.9 230.1 L1224.9 239.6 L1237.6 255.5 L1259.7 263.4 L1267.6 265.0 M1182.2 261.8 L1201.2 260.2 L1224.9 268.1 L1232.8 279.2 L1248.6 271.3 L1256.6 263.4 L1266.0 263.4 M1232.8 279.2 L1226.5 288.7 L1234.4 309.3 L1237.6 320.3 L1256.6 318.8 M1261.3 252.3 L1269.2 241.2 L1277.1 238.0 L1288.2 244.4 L1281.9 249.1 L1288.2 253.9 L1295.0 252.3 M1288.2 271.3 L1295.0 265.0 M1103.0 233.3 L1122.0 239.6 L1133.1 236.5 L1145.8 236.5 M1117.3 238.0 L1125.2 246.0 L1130.0 255.5 L1123.6 258.6 M1035.0 272.9 L1055.6 271.3 L1079.3 271.3 L1101.5 266.5 L1125.2 265.0 M1123.6 258.6 L1126.8 268.1 L1136.3 280.8 L1145.8 296.6 L1155.3 309.3 L1161.6 317.2 M1111.0 268.1 L1109.4 280.8 L1095.1 295.0 L1076.1 301.3 M1077.7 301.3 L1090.4 323.5 M1096.7 296.6 L1101.5 302.9 L1114.1 307.7 L1130.0 321.9 L1145.8 321.9 L1158.4 318.8 M1073.0 285.5 L1080.9 288.7 L1076.1 296.6 L1077.7 312.4" fill="none" stroke="#3a3a3a" stroke-width="1.6" stroke-linejoin="round"/><path d="M1035.0 206.4 L1044.5 201.7 L1050.8 206.4 L1052.4 211.1 L1060.3 215.9 L1068.2 211.1 L1063.5 204.8 L1080.9 197.7 M1080.9 197.7 L1077.7 212.7 L1087.2 219.1 L1101.5 228.6 L1103.0 233.3 L1098.3 241.2 L1088.8 242.0 L1074.6 238.0 L1058.7 233.3 L1044.5 236.5 L1035.0 239.6 M1133.1 214.3 L1139.4 205.6 L1145.8 200.9 L1156.9 199.3 L1167.9 208.8 L1161.6 211.1 L1155.3 214.3 L1153.7 220.6 L1156.9 225.4 L1171.1 230.1 L1179.0 238.0 L1174.3 244.4 L1179.0 252.3 L1182.2 261.8 M1133.1 214.3 L1137.9 223.8 L1145.8 233.3 L1150.5 238.0 M1161.6 265.0 L1171.1 263.4 L1182.2 261.8 M1145.8 320.3 L1155.3 317.2 L1161.6 315.6 L1169.5 321.9 L1174.3 330.0 M1055.6 279.2 L1066.7 276.0 L1065.1 280.8 L1057.2 285.5Z M1076.1 271.3 L1074.6 283.9 L1073.0 296.6 L1071.4 312.4 L1068.2 330.0 M1035.0 309.3 L1050.8 307.7 L1066.7 309.3 L1071.4 312.4 M1058.7 320.3 L1063.5 328.3" fill="none" stroke="#111" stroke-width="2.05" stroke-linejoin="round"/></g><g mask="url(#cp10)"><path d="M972.7 225.3 L976.2 225.3 L979.8 230.7 L981.6 237.8 L979.8 244.9 L978.0 249.4 M981.6 230.7 L988.7 228.9 L993.1 232.5 L994.9 236.0 L1011.8 236.0 L1015.4 234.2 L1023.4 233.4 L1025.2 228.9 L1026.1 220.0 M991.4 220.0 L993.1 225.3 L990.5 229.8 M984.2 240.5 L994.0 236.0 M1015.4 234.2 L1014.5 240.5 M905.0 285.9 L913.9 296.6 L916.6 310.0 M929.0 294.8 L922.8 301.9 L920.1 310.0 M1077.7 284.1 L1080.4 287.7 L1075.9 300.1 L1076.8 310.0 M1075.9 271.6 L1085.0 269.9 M1074.1 301.9 L1085.0 298.3" fill="none" stroke="#3a3a3a" stroke-width="1.6" stroke-linejoin="round"/><path d="M911.2 228.9 L916.6 227.1 L917.5 236.0 L912.1 236.0 L911.2 233.4Z M907.7 243.1 L912.1 239.6 L917.5 240.5 L917.5 252.9 L912.1 254.7 L908.6 249.4Z M918.4 220.0 L922.8 227.1 L931.7 234.2 L942.4 240.5 L949.5 245.8 L953.1 252.9 L953.5 260.1 L956.6 257.4 L960.2 253.8 L958.4 246.7 L962.9 244.0 L969.1 246.7 L969.1 243.1 L958.4 237.8 L947.7 231.6 L938.8 223.6 L936.2 220.0 M933.9 263.6 L938.8 260.1 L946.0 259.2 L952.2 261.0 L946.8 269.9 L943.3 270.7 L941.5 268.1Z M951.3 220.0 L958.4 225.3 L967.3 228.0 L972.7 235.1 L975.3 246.7 L978.9 252.9 L986.9 256.5 L991.4 257.4 L989.6 259.2 L986.0 261.0 L986.9 267.2 L994.0 271.6 L997.6 268.1 L999.4 261.0 L996.7 253.8 L994.0 248.5 L999.4 244.9 L1002.9 242.3 L1011.8 241.4 L1014.5 245.8 L1015.4 251.2 L1020.7 262.7 L1025.2 269.9 L1027.9 271.6 L1034.1 272.5 L1042.1 270.7 L1051.9 273.4 L1061.7 275.2 L1070.6 270.7 L1075.9 271.6 L1074.1 282.3 L1071.5 293.9 L1072.4 304.6 L1070.6 310.0 M1015.4 241.4 L1020.7 237.8 L1028.7 238.7 L1030.5 242.3 L1023.4 244.0 L1017.2 244.9 M1030.5 239.6 L1038.5 238.7 L1043.9 237.8 L1051.9 233.4 L1065.2 234.2 L1074.1 236.9 L1085.0 241.4 M999.4 278.8 L1005.6 277.9 L1017.2 278.8 L1018.9 282.3 L1016.3 284.1 L1007.4 283.2 L1000.3 281.4Z M1024.3 273.4 L1027.9 273.4 L1027.9 276.1 L1024.3 276.1Z M1055.4 280.5 L1062.6 277.0 L1067.0 276.1 L1063.5 282.3 L1056.3 285.9Z M905.0 269.9 L912.1 266.3 L921.9 268.1 L922.8 275.2 L922.8 285.9 L929.9 294.8 L945.1 296.6 L951.3 301.9 L956.6 310.0 M979.8 310.0 L982.5 296.6 L994.0 296.6 L1007.4 303.7 L1020.7 307.2 L1038.5 307.2 L1056.3 307.2 L1069.7 304.6" fill="none" stroke="#111" stroke-width="2.05" stroke-linejoin="round"/></g><g mask="url(#cp11)"><path d="M1245.5 230.0 L1253.8 235.5 L1264.8 236.9 L1274.5 232.8 L1275.9 230.0 M1215.0 234.2 L1227.5 238.3 L1233.0 248.0 L1242.7 254.9 L1255.1 261.8 L1260.7 263.2 L1266.2 267.4 L1274.5 264.6 L1280.1 259.1 L1284.2 257.7 L1292.5 266.0 L1298.1 267.4 L1306.4 266.0 M1260.7 250.8 L1264.8 259.1 L1267.6 263.2 M1271.8 241.1 L1278.7 238.3 L1288.4 240.4 L1284.2 245.2 L1277.3 246.6 L1271.8 243.8 M1298.1 248.0 L1311.9 241.1 L1325.8 235.5 L1329.9 230.0 M1274.5 250.8 L1284.2 250.8 L1293.9 256.3 L1299.5 253.5 L1305.0 259.1 L1306.4 266.0 M1306.4 266.0 L1314.7 271.5 L1325.8 277.1 L1336.8 279.8 L1342.4 284.0 M1215.0 264.6 L1226.1 268.8 L1230.2 275.7 L1226.1 288.1 L1228.8 299.2 L1235.8 308.9 L1237.2 320.0 L1249.6 321.4 L1255.1 318.6 M1255.1 318.6 L1264.8 313.1 L1270.4 307.5 L1275.9 304.8 M1292.5 266.0 L1289.8 275.7 L1292.5 284.0 M1306.4 285.4 L1314.7 282.6 L1324.4 279.8 L1328.5 278.5 M1309.1 285.4 L1309.1 293.7 L1317.5 300.6 L1320.2 306.1 M1289.8 335.2 L1292.5 343.5 L1299.5 351.8 L1293.9 357.4 L1287.0 354.6 M1352.1 324.1 L1354.8 315.8 L1363.1 314.5 L1374.2 321.4 L1379.8 324.1 M1400.5 326.9 L1408.8 331.1 L1411.6 335.2 M1408.8 340.8 L1414.4 347.7 L1419.9 350.4 M1415.7 329.7 L1422.7 328.3 M1242.7 350.4 L1244.1 343.5 L1249.6 335.2" fill="none" stroke="#3a3a3a" stroke-width="1.6" stroke-linejoin="round"/><path d="M1215.0 343.5 L1223.3 349.1 L1233.0 351.8 L1242.7 350.4 L1256.5 349.1 L1270.4 350.4 L1278.7 354.6 L1287.0 362.9 L1295.3 368.4 L1298.1 370.0 M1215.0 356.0 L1223.3 361.5 L1231.6 370.0" fill="none" stroke="#111" stroke-width="2.05" stroke-linejoin="round"/></g><g mask="url(#cp12)"><path d="M931.3 568.8 L962.1 568.8 L969.8 581.7 L980.1 581.7 L993.0 576.6 L998.1 602.3 L1008.4 607.4 L1026.4 608.7 L1039.2 617.7 L1047.0 616.4 L1036.7 599.7 L1039.2 586.8 L1052.1 583.0 L1064.9 594.6 L1070.1 594.6 M1008.4 606.1 L995.5 620.3 L995.5 640.8 L1003.3 648.5 L1023.8 651.1 M930.0 646.0 L962.1 648.5 L987.8 652.4 L1013.5 649.8 M1013.5 651.1 L1023.8 651.1 L1039.2 635.7 L1064.9 622.8 M1077.8 607.4 L1095.8 607.4 L1113.8 602.3 M1044.4 520.0 L1041.8 540.6 L1044.4 558.6 L1052.1 581.7 M1080.4 540.6 L1095.8 543.1 L1108.7 558.6 M987.8 653.7 L980.1 689.7 L982.7 725.7 L972.4 728.2 L959.6 723.1 M982.7 699.9 L987.8 712.8 L1000.7 705.1 L1013.5 707.7 L1039.2 682.0 L1054.7 682.0 L1054.7 710.2 M1016.1 651.1 L1029.0 674.2 L1039.2 682.0 M1041.8 635.7 L1064.9 648.5 L1062.4 674.2 L1054.7 682.0 M926.1 550.8 L944.1 540.6 L946.7 530.3 L941.6 520.0 M931.3 563.7 L944.1 561.1 L962.1 550.8 L969.8 535.4 L969.8 520.0" fill="none" stroke="#3a3a3a" stroke-width="1.6" stroke-linejoin="round"/><path d="M910.7 532.9 L923.6 550.8 L931.3 563.7 L936.4 579.1 L944.1 604.8 L939.0 617.7 L931.3 635.7 L930.0 648.5 L933.8 658.8 L946.7 682.0 L951.8 715.4 L962.1 733.4 L969.8 751.4 L972.4 764.2 L982.7 769.4 L1008.4 766.8 L1029.0 756.5 L1047.0 738.5 L1062.4 723.1 L1059.8 705.1 L1077.8 694.8 L1080.4 676.8 L1075.2 669.1 L1090.7 651.1 L1111.2 640.8 L1116.4 622.8 L1113.8 602.3 L1108.7 584.3 L1106.1 571.4 L1108.7 556.0 L1121.5 535.4 L1139.5 520.0 M1067.5 594.6 L1072.7 607.4 L1075.2 622.8 L1082.9 633.1 L1077.8 640.8 L1070.1 630.5 L1064.9 622.8 M1049.5 710.2 L1054.7 707.7 L1057.2 715.4 L1052.1 717.9Z M1023.8 733.4 L1031.5 726.9 L1039.2 730.8 L1034.1 738.5 L1027.7 738.5Z M1129.2 699.9 L1126.6 682.0 L1136.9 661.4 L1139.5 640.8 L1154.9 633.1 L1167.8 612.5 L1175.5 628.0 L1167.8 664.0 L1160.1 687.1 L1152.4 699.9 L1139.5 705.1Z M1126.6 610.0 L1130.5 610.0 L1130.5 613.8 L1126.6 613.8Z M1131.8 615.1 L1138.2 615.1 L1138.2 619.0 L1131.8 619.0Z M1041.8 535.4 L1049.5 540.6 L1044.4 550.8" fill="none" stroke="#111" stroke-width="2.05" stroke-linejoin="round"/></g><g mask="url(#cp13)"><path d="M926.6 115.8 L932.6 105.7 L929.6 90.6 L935.6 86.5 L940.7 78.4 L943.7 72.4 L951.8 67.3 L957.9 60.3 L971.0 57.3 L976.0 58.8 M976.0 59.3 L982.1 63.3 L984.1 74.4 L985.1 76.4 M976.0 58.8 L990.2 58.8 L997.2 50.7 L1006.3 51.7 L1013.4 51.2 M1008.3 54.2 L1006.3 59.3 L1012.4 66.3 L1010.3 70.4 L1016.4 86.5 L1024.5 95.6 L1020.4 100.6 L1014.4 107.7 L1008.3 109.7 M989.1 116.8 L1010.3 117.8 L1011.3 130.0" fill="none" stroke="#3a3a3a" stroke-width="1.6" stroke-linejoin="round"/><path d="M926.6 115.8 L923.5 119.8 L920.5 118.8 L910.4 124.9 L902.3 124.9 L895.3 116.8 L893.3 106.7 L894.3 100.6 L900.3 95.6 L910.4 92.6 L920.5 87.5 L927.6 82.5 L931.6 75.4 L938.7 69.4 L945.7 60.3 L950.8 56.2 L965.9 51.2 L981.1 46.1 L991.2 46.7 L996.2 47.2 L1001.3 46.1 L1009.3 48.2 L1021.4 52.2 L1028.5 56.2 L1036.6 56.2 L1046.7 59.3 L1056.8 62.3 L1066.9 66.3 L1067.9 70.4 L1062.8 73.4 L1046.7 73.4 L1036.6 70.4 L1028.5 69.4 L1027.5 71.4 L1035.6 77.4 L1039.6 85.5 L1050.7 89.5 L1056.8 87.5 L1055.8 84.5 L1051.7 81.5 L1060.8 82.5 L1065.8 79.5 L1066.9 75.4 L1069.9 73.4 L1082.0 70.4 L1081.0 62.3 L1086.0 62.3 L1089.1 67.3 L1095.1 68.4 L1107.2 61.3 L1125.0 57.3 M952.8 130.0 L960.9 122.9 L964.9 116.8 L963.9 109.7 L955.8 104.7 L954.8 100.6 L958.9 93.6 L966.9 90.6 L974.0 84.5 L981.1 77.4 L985.1 76.4 L988.1 79.5 L986.1 84.5 L978.0 93.6 L976.0 100.6 L978.0 107.7 L986.1 111.8 L996.2 111.8 L1008.3 109.7 L1016.4 112.8 L1014.4 114.8 L1004.3 116.8 L996.2 114.8 L989.1 116.8 L986.1 118.8 L981.1 122.9 L979.0 130.0 M984.1 118.8 L987.1 120.8 L991.2 126.9 L993.2 130.0 M981.1 120.8 L985.1 118.8 L987.1 123.9 L982.1 124.9Z" fill="none" stroke="#111" stroke-width="2.05" stroke-linejoin="round"/></g><g mask="url(#cp14)"><path d="M1492.4 440.0 L1490.6 456.0 L1497.7 466.7 L1497.4 472.9 M1565.4 521.9 L1579.6 518.3 L1597.4 511.2" fill="none" stroke="#3a3a3a" stroke-width="1.6" stroke-linejoin="round"/><path d="M1486.1 440.0 L1484.4 459.6 L1482.6 468.5 L1495.0 475.6 L1498.6 472.9 M1504.8 500.5 L1513.7 511.2 L1522.6 516.5 L1524.4 511.2 L1520.9 500.5 M1503.1 440.0 L1517.3 454.2 L1528.0 456.0 L1526.2 464.9 L1531.5 466.7 L1549.3 450.7 L1552.9 440.0 M1467.5 488.1 L1474.6 488.1 L1490.6 497.0 L1501.3 509.4 L1515.5 520.1 L1524.4 532.6 L1533.3 546.8 L1536.9 555.7 L1535.1 564.6 L1528.0 566.4 L1522.6 562.8 L1510.2 553.9 L1499.5 539.7 L1492.4 525.4 L1481.7 507.6 L1469.2 493.4Z M1544.0 569.9 L1558.2 575.3 L1570.7 572.6 L1579.6 575.3 L1593.8 582.4 L1595.6 587.7 L1584.9 587.7 L1565.4 582.4 L1549.3 580.6Z M1601.0 586.0 L1609.9 585.1 L1613.4 589.5 L1604.5 591.3Z M1645.5 596.6 L1654.4 586.0 L1670.4 586.8 L1670.4 590.4 L1656.1 593.1 L1649.0 599.3Z M1556.5 518.3 L1560.0 515.6 L1565.4 514.8 L1576.0 505.9 L1588.5 504.1 M1604.5 480.0 L1611.6 480.9 L1618.8 491.6 L1611.6 500.5 L1613.4 511.2 L1618.8 520.1 L1611.6 532.6 L1606.3 545.0 L1595.6 553.9 L1579.6 550.4 L1563.6 548.6 M1624.1 536.1 L1625.9 520.1 L1636.6 516.5 L1659.7 515.6 L1657.9 521.9 L1645.5 525.4 L1631.2 527.2 L1631.2 532.6 L1647.2 532.6 L1641.9 537.9 M1675.7 518.3 L1681.1 510.3 L1684.6 513.0 L1679.3 518.3Z M1606.3 466.7 L1609.9 459.6 L1620.5 449.8 L1622.3 454.2 L1615.2 463.1 L1608.1 468.5Z M1633.0 443.6 L1641.9 450.7 L1641.9 463.1 L1643.7 468.5 L1640.1 475.6 L1638.3 472.0 M1649.0 450.7 L1652.6 456.0 M1714.9 473.8 L1718.4 471.1 L1720.2 475.6 L1716.7 477.4Z M1697.1 534.3 L1707.8 531.7 L1716.7 539.7 L1722.0 546.8 L1735.0 541.5 M1684.6 620.0 L1704.2 609.1 L1725.6 612.7 L1727.3 620.0" fill="none" stroke="#111" stroke-width="2.05" stroke-linejoin="round"/></g><g mask="url(#cp15)"><path d="M779.5 417.4 L816.9 417.4 L816.9 380.0 M859.6 380.0 L877.5 392.5 L891.7 392.5 L909.5 380.0 M882.8 392.5 L881.0 417.4 L852.5 421.0 L856.1 422.7 M745.7 421.0 L754.6 410.3 L763.5 410.3 L774.2 419.2 L783.1 437.0 L777.7 438.8 L759.9 438.8 L749.2 438.8 M759.9 438.8 L770.6 440.5 L786.6 440.5 L797.3 440.5 L802.7 451.2 L816.9 453.0 L820.5 456.6 M770.6 458.3 L777.7 456.6 L786.6 461.9 L786.6 472.6 L781.3 481.5 M836.5 454.8 L834.7 492.2 M856.1 422.7 L857.9 433.4 L870.3 442.3 L866.8 447.7 L857.9 449.4 L854.3 454.8 L859.6 461.9 M877.5 442.3 L877.5 454.8 L881.0 483.3 M877.5 429.9 L888.1 426.3 L898.8 429.9 L913.1 433.4 L927.3 435.2 L939.8 431.6 M941.6 447.7 L934.4 460.1 L929.1 476.2 L913.1 486.8 L911.3 494.0 M955.8 380.0 L954.0 397.8 L945.1 415.6 L939.8 431.6 L941.6 447.7 M1002.1 380.0 L1005.7 387.1 L1005.7 417.4 L998.5 421.0 L996.8 433.4 L1000.3 447.7 L1007.4 465.5 L1019.9 479.7 L1027.0 486.8 L1034.1 495.7 L1046.6 497.5 M945.1 460.1 L954.0 472.6 L964.7 472.6 L980.7 463.7 L1000.3 449.4 M952.2 472.6 L948.7 486.8 L955.8 504.6 L975.4 501.1 M955.8 504.6 L957.6 511.8 L948.7 513.5 L941.6 515.3 L946.9 522.5 L945.1 534.9 L934.4 543.8 L927.3 550.9 M975.4 501.1 L980.7 492.2 L995.0 495.7 L1011.0 490.4 L1025.2 488.6 L1034.1 495.7 M975.4 501.1 L964.7 531.4 L957.6 550.9 L945.1 558.1 M1064.4 469.0 L1073.3 458.3 L1080.4 437.0 L1089.3 426.3 L1100.0 424.5 L1117.8 428.1 L1126.7 438.8 L1132.1 445.9 M1066.2 470.8 L1082.2 486.8 L1091.1 494.0 L1105.4 501.1 L1117.8 497.5 L1126.7 495.7 L1141.0 492.2 M1087.6 424.5 L1089.3 408.5 L1100.0 401.4 M1130.3 406.7 L1151.7 408.5 L1162.4 399.6 L1175.0 394.2 M1123.2 499.3 L1117.8 513.5 L1114.3 527.8 M1078.7 485.1 L1071.5 494.0 L1059.1 511.8 L1048.4 522.5 L1043.0 540.3 L1041.3 550.9 L1044.8 560.0 M1078.7 536.7 L1092.9 540.3 L1101.8 549.2 L1107.2 560.0 M1034.1 495.7 L1048.4 497.5 L1053.7 504.6" fill="none" stroke="#3a3a3a" stroke-width="1.6" stroke-linejoin="round"/><path d="M749.2 380.0 L752.8 390.7 L754.6 403.1 L749.2 415.6 L745.7 421.0 L747.5 433.4 L749.2 438.8 L758.1 449.4 L770.6 458.3 L770.6 469.0 L781.3 481.5 L793.8 492.2 L806.2 495.7 L820.5 492.2 L838.3 492.2 L847.2 490.4 L859.6 486.8 L873.9 485.1 L882.8 483.3 L889.9 494.0 L898.8 495.7 L909.5 497.5 L913.1 501.1 L911.3 515.3 L911.3 533.1 L916.6 543.8 L923.7 550.9 L929.1 560.0 M747.5 433.4 L758.1 431.6 L765.3 433.4 L758.1 435.2 L748.4 435.2 M1091.1 380.0 L1092.9 390.7 L1105.4 403.1 L1117.8 413.8 L1126.7 421.0 L1132.1 437.0 L1133.9 445.9 M1103.6 380.0 L1110.7 387.1 L1123.2 397.8 L1126.7 410.3 L1130.3 421.0 L1135.6 435.2 L1151.7 431.6 L1175.0 424.5 M1149.9 451.2 L1175.0 444.1 M1175.0 472.6 L1169.5 481.5 L1162.4 495.7 L1153.4 504.6 L1141.0 515.3 L1126.7 527.8 L1117.8 536.7 L1108.9 560.0 M1044.8 534.9 L1050.2 538.5 L1046.6 550.9 L1043.0 545.6" fill="none" stroke="#111" stroke-width="2.05" stroke-linejoin="round"/></g>
<g font-family="Liberation Sans, sans-serif" font-size="14.6" fill="#fff" stroke="#fff" stroke-width="0.45" text-anchor="middle"><defs><polygon id="st" points="0.00,-17.60 1.85,-14.08 4.56,-17.00 5.43,-13.12 8.80,-15.24 8.64,-11.27 12.45,-12.45 11.27,-8.64 15.24,-8.80 13.12,-5.43 17.00,-4.56 14.08,-1.85 17.60,0.00 14.08,1.85 17.00,4.56 13.12,5.43 15.24,8.80 11.27,8.64 12.45,12.45 8.64,11.27 8.80,15.24 5.43,13.12 4.56,17.00 1.85,14.08 0.00,17.60 -1.85,14.08 -4.56,17.00 -5.43,13.12 -8.80,15.24 -8.64,11.27 -12.45,12.45 -11.27,8.64 -15.24,8.80 -13.12,5.43 -17.00,4.56 -14.08,1.85 -17.60,0.00 -14.08,-1.85 -17.00,-4.56 -13.12,-5.43 -15.24,-8.80 -11.27,-8.64 -12.45,-12.45 -8.64,-11.27 -8.80,-15.24 -5.43,-13.12 -4.56,-17.00 -1.85,-14.08" fill="#a67c2e"/></defs>
<use href="#st" x="910.3" y="167.8"/><text x="911.1" y="172.5">1</text>
<use href="#st" x="1633.6" y="427.5"/><text x="1634.4" y="432.2">2</text>
<use href="#st" x="1755.3" y="544.7"/><text x="1756.1" y="549.4">3</text>
<use href="#st" x="1331.8" y="341.0"/><text x="1332.6" y="345.7">4</text>
<use href="#st" x="1489.3" y="410.5"/><text x="1490.1" y="415.2">5</text>
<use href="#st" x="1591.2" y="493.8"/><text x="1592.0" y="498.5">6</text>
<use href="#st" x="1343.4" y="370.4"/><text x="1344.2" y="375.1">7</text>
<use href="#st" x="1656.7" y="481.9"/><text x="1657.5" y="486.6">8</text>
<use href="#st" x="1626.5" y="391.9"/><text x="1627.3" y="396.6">9</text>
<use href="#st" x="369.8" y="289.0"/><text x="370.6" y="293.7">10</text>
<use href="#st" x="1087.8" y="575.8"/><text x="1088.6" y="580.5">11</text>
<use href="#st" x="1669.2" y="447.1"/><text x="1670.0" y="451.8">12</text>
<use href="#st" x="1676.4" y="536.4"/><text x="1677.2" y="541.1">13</text>
<use href="#st" x="1520.5" y="410.6"/><text x="1521.3" y="415.3">14</text>
<use href="#st" x="1508.0" y="485.4"/><text x="1508.8" y="490.1">15</text>
<use href="#st" x="1374.5" y="387.3"/><text x="1375.3" y="392.0">16</text>
<use href="#st" x="1360.3" y="341.0"/><text x="1361.1" y="345.7">17</text>
<use href="#st" x="1135.6" y="464.7"/><text x="1136.4" y="469.4">18</text>
<use href="#st" x="1064.9" y="536.4"/><text x="1065.7" y="541.1">19</text>
<use href="#st" x="1435.9" y="341.0"/><text x="1436.7" y="345.7">20</text>
<use href="#st" x="836.2" y="441.2"/><text x="837.0" y="445.9">21</text>
<use href="#st" x="1389.6" y="309.8"/><text x="1390.4" y="314.5">22</text>
<use href="#st" x="306.1" y="447.1"/><text x="306.9" y="451.8">23</text>
<use href="#st" x="866.5" y="470.6"/><text x="867.3" y="475.3">24</text>
<use href="#st" x="1437.7" y="368.6"/><text x="1438.5" y="373.3">25</text>
<use href="#st" x="200.9" y="368.8"/><text x="201.7" y="373.5">26</text>
<use href="#st" x="1338.0" y="305.4"/><text x="1338.8" y="310.1">27</text>
<use href="#st" x="943.2" y="168.0"/><text x="944.0" y="172.7">28</text>
<use href="#st" x="1557.9" y="334.0"/><text x="1558.7" y="338.7">29</text>
<use href="#st" x="1738.7" y="568.6"/><text x="1739.5" y="573.3">30</text>
<use href="#st" x="1771.9" y="568.6"/><text x="1772.7" y="573.3">31</text>
<use href="#st" x="1655.0" y="394.6"/><text x="1655.8" y="399.3">32</text>
<use href="#st" x="1150.1" y="252.6"/><text x="1150.9" y="257.3">33</text>
<use href="#st" x="236.5" y="368.8"/><text x="237.3" y="373.5">34</text>
<use href="#st" x="218.3" y="398.8"/><text x="219.1" y="403.5">35</text>
<use href="#st" x="1466.2" y="347.2"/><text x="1467.0" y="351.9">36</text>
<use href="#st" x="829.1" y="403.8"/><text x="829.9" y="408.5">37</text>
<use href="#st" x="1386.1" y="341.0"/><text x="1386.9" y="345.7">38</text>
<use href="#st" x="911.9" y="469.7"/><text x="912.7" y="474.4">39</text>
<use href="#st" x="1243.6" y="536.4"/><text x="1244.4" y="541.1">40</text>
<use href="#st" x="1243.6" y="486.5"/><text x="1244.4" y="491.2">41</text>
<use href="#st" x="1053.6" y="116.0"/><text x="1054.4" y="120.7">42</text>
<use href="#st" x="1544.5" y="427.5"/><text x="1545.3" y="432.2">43</text>
<use href="#st" x="989.6" y="559.2"/><text x="990.4" y="563.9">44</text>
<use href="#st" x="1410.1" y="368.6"/><text x="1410.9" y="373.3">45</text>
<use href="#st" x="1410.1" y="394.4"/><text x="1410.9" y="399.1">46</text>
<use href="#st" x="937.8" y="498.2"/><text x="938.6" y="502.9">47</text>
<use href="#st" x="1371.9" y="417.5"/><text x="1372.7" y="422.2">48</text>
<use href="#st" x="1310.4" y="387.3"/><text x="1311.2" y="392.0">49</text>
<use href="#st" x="1310.4" y="324.1"/><text x="1311.2" y="328.8">50</text>
<use href="#st" x="262.6" y="404.4"/><text x="263.4" y="409.1">51</text>
<use href="#st" x="240.4" y="422.6"/><text x="241.2" y="427.3">52</text>
<use href="#st" x="1572.1" y="363.4"/><text x="1572.9" y="368.1">53</text>
<use href="#st" x="1267.7" y="333.0"/><text x="1268.5" y="337.7">54</text>
<use href="#st" x="1173.0" y="276.5"/><text x="1173.8" y="281.2">55</text>
<use href="#st" x="1510.7" y="380.3"/><text x="1511.5" y="385.0">56</text>
<use href="#st" x="1418.1" y="309.8"/><text x="1418.9" y="314.5">57</text>
<use href="#st" x="937.4" y="135.0"/><text x="938.2" y="139.7">58</text>
<use href="#st" x="1594.4" y="333.2"/><text x="1595.2" y="337.9">59</text>
<use href="#st" x="395.8" y="261.9"/><text x="396.6" y="266.6">60</text>
<use href="#st" x="1456.4" y="309.8"/><text x="1457.2" y="314.5">61</text>
<use href="#st" x="1488.4" y="309.8"/><text x="1489.2" y="314.5">62</text>
<use href="#st" x="1629.6" y="551.9"/><text x="1630.4" y="556.6">63</text>
<use href="#st" x="265.0" y="441.5"/><text x="265.8" y="446.2">64</text>
<use href="#st" x="235.7" y="447.1"/><text x="236.5" y="451.8">65</text>
<use href="#st" x="1112.7" y="536.4"/><text x="1113.5" y="541.1">66</text>
<use href="#st" x="1517.8" y="351.9"/><text x="1518.6" y="356.6">67</text>
<use href="#st" x="1540.1" y="375.9"/><text x="1540.9" y="380.6">68</text>
<use href="#st" x="353.2" y="592.4"/><text x="354.0" y="597.1">69</text>
<use href="#st" x="1291.7" y="305.4"/><text x="1292.5" y="310.1">70</text>
<use href="#st" x="1507.5" y="536.4"/><text x="1508.3" y="541.1">71</text>
<use href="#st" x="1159.5" y="486.5"/><text x="1160.3" y="491.2">72</text>
<use href="#st" x="1360.3" y="286.3"/><text x="1361.1" y="291.0">73</text>
<use href="#st" x="1432.4" y="417.5"/><text x="1433.2" y="422.2">74</text>
<use href="#st" x="1276.8" y="210.0"/><text x="1277.6" y="214.7">75</text>
<use href="#st" x="862.1" y="498.2"/><text x="862.9" y="502.9">76</text>
<use href="#st" x="310.8" y="474.8"/><text x="311.6" y="479.5">77</text>
<use href="#st" x="1629.6" y="583.1"/><text x="1630.4" y="587.8">78</text>
<use href="#st" x="1389.6" y="286.3"/><text x="1390.4" y="291.0">79</text>
<use href="#st" x="911.9" y="441.2"/><text x="912.7" y="445.9">80</text>
<use href="#st" x="207.2" y="427.3"/><text x="208.0" y="432.0">81</text>
<use href="#st" x="565.7" y="592.4"/><text x="566.5" y="597.1">82</text>
<use href="#st" x="971.3" y="168.0"/><text x="972.1" y="172.7">83</text>
<use href="#st" x="1696.1" y="568.6"/><text x="1696.9" y="573.3">84</text>
<use href="#st" x="1555.3" y="536.4"/><text x="1556.1" y="541.1">85</text>
<use href="#st" x="1531.4" y="583.1"/><text x="1532.2" y="587.8">86</text>
<use href="#st" x="960.5" y="276.5"/><text x="961.3" y="281.2">87</text>
<use href="#st" x="961.8" y="441.2"/><text x="962.6" y="445.9">88</text>
<use href="#st" x="913.7" y="516.9"/><text x="914.5" y="521.6">89</text>
<use href="#st" x="1064.9" y="497.9"/><text x="1065.7" y="502.6">90</text>
<use href="#st" x="1088.8" y="516.6"/><text x="1089.6" y="521.3">91</text>
<use href="#st" x="810.4" y="474.2"/><text x="811.2" y="478.9">92</text></g>
</svg>
  </div>
</div>
</body></html>
